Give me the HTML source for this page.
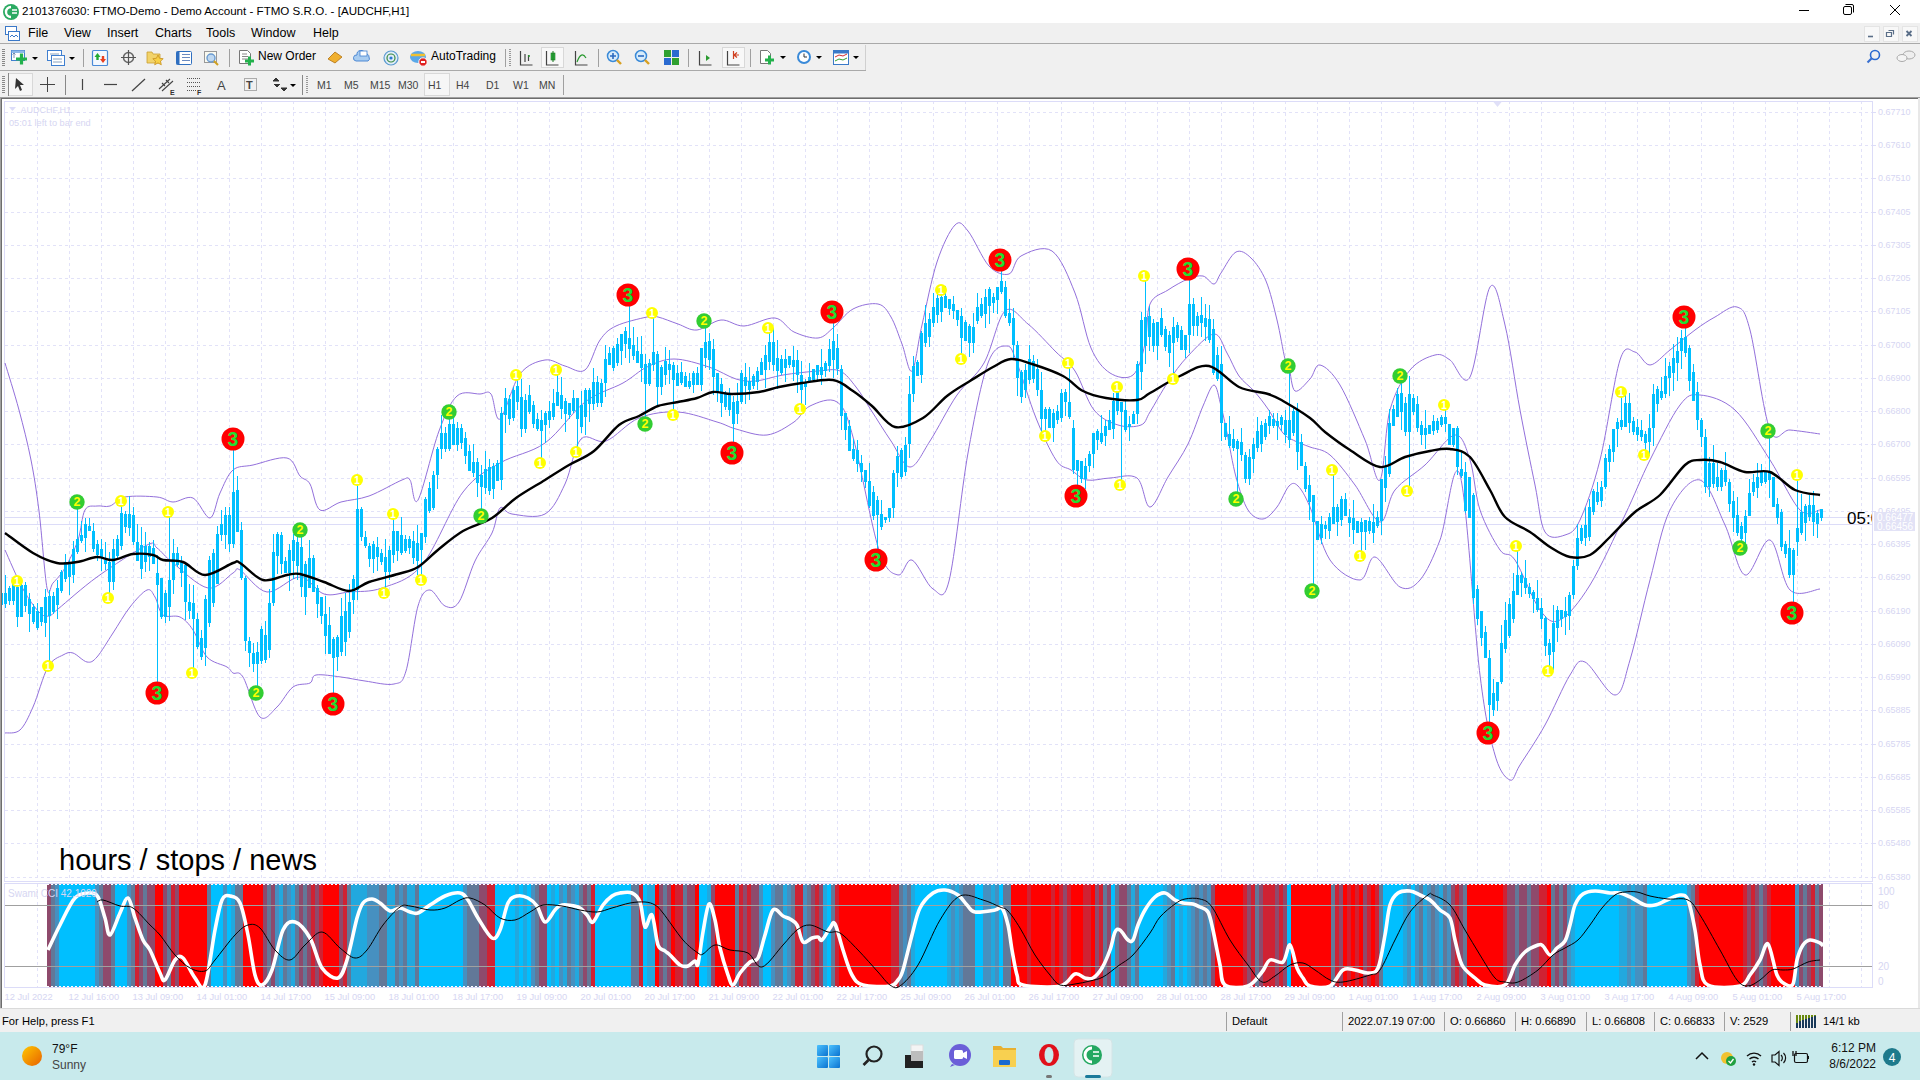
<!DOCTYPE html>
<html><head><meta charset="utf-8">
<style>
*{margin:0;padding:0;box-sizing:border-box}
html,body{width:1920px;height:1080px;overflow:hidden;background:#fff;font-family:"Liberation Sans",sans-serif;color:#000}
.abs{position:absolute}
#title{left:0;top:0;width:1920px;height:23px;background:#fff}
#title .t{left:22px;top:4px;font-size:11.6px;white-space:nowrap}
#menu{left:0;top:23px;width:1920px;height:21px;background:#F0F0F0;border-bottom:1px solid #A9A9A9}
#menu span{position:absolute;top:3px;font-size:12.5px}
#tb1{left:0;top:44px;width:1920px;height:27px;background:#F0F0F0}
#tb2{left:0;top:71px;width:1920px;height:27px;background:#F0F0F0}
.tbt{position:absolute;font-size:12px;white-space:nowrap}
#status{left:0;top:1008px;width:1920px;height:24px;background:#F0F0F0;border-top:1px solid #DADADA}
#status span{position:absolute;top:6px;font-size:11.2px;white-space:nowrap}
.sep{position:absolute;top:3px;width:1px;height:19px;background:#A0A0A0}
#taskbar{left:0;top:1032px;width:1920px;height:48px;background:#C8EAEC}
.chart{position:absolute;left:0;top:0}
.ax{font-size:10px;fill:#D6D6F2;font-family:"Liberation Sans",sans-serif}
.dl{font-size:9.3px}
.pl{font-size:9px}
.axw{font-size:10px;fill:#fff;font-family:"Liberation Sans",sans-serif}
.big{font-size:29px;fill:#000;font-family:"Liberation Sans",sans-serif}
.cd{font-size:17px;fill:#000;font-family:"Liberation Sans",sans-serif}
.d3{font-size:19.5px;font-weight:bold;fill:#22DD33;text-anchor:middle;font-family:"Liberation Sans",sans-serif}
.d2{font-size:12.5px;font-weight:bold;fill:#FFFF00;text-anchor:middle;font-family:"Liberation Sans",sans-serif}
.d1{font-size:10px;font-weight:bold;fill:#fff;text-anchor:middle;font-family:"Liberation Sans",sans-serif}
</style></head><body>
<svg class="chart" width="1920" height="1080" viewBox="0 0 1920 1080">
<rect x="2" y="99" width="1916" height="909" fill="#fff"/>
<g stroke="#E2E2F8" stroke-width="1" stroke-dasharray="3 3" fill="none" shape-rendering="crispEdges"><path d="M5 112.5H1872M5 145.5H1872M5 178.5H1872M5 212.5H1872M5 245.5H1872M5 278.5H1872M5 311.5H1872M5 345.5H1872M5 378.5H1872M5 411.5H1872M5 444.5H1872M5 478.5H1872M5 511.5H1872M5 544.5H1872M5 577.5H1872M5 611.5H1872M5 644.5H1872M5 677.5H1872M5 710.5H1872M5 744.5H1872M5 777.5H1872M5 810.5H1872M5 843.5H1872M5 877.5H1872M37.5 101V881M69.5 101V881M101.5 101V881M133.5 101V881M165.5 101V881M197.5 101V881M229.5 101V881M261.5 101V881M293.5 101V881M325.5 101V881M357.5 101V881M389.5 101V881M421.5 101V881M453.5 101V881M485.5 101V881M517.5 101V881M549.5 101V881M581.5 101V881M613.5 101V881M645.5 101V881M677.5 101V881M709.5 101V881M741.5 101V881M773.5 101V881M805.5 101V881M837.5 101V881M869.5 101V881M901.5 101V881M933.5 101V881M965.5 101V881M997.5 101V881M1029.5 101V881M1061.5 101V881M1093.5 101V881M1125.5 101V881M1157.5 101V881M1189.5 101V881M1221.5 101V881M1253.5 101V881M1285.5 101V881M1317.5 101V881M1349.5 101V881M1381.5 101V881M1413.5 101V881M1445.5 101V881M1477.5 101V881M1509.5 101V881M1541.5 101V881M1573.5 101V881M1605.5 101V881M1637.5 101V881M1669.5 101V881M1701.5 101V881M1733.5 101V881M1765.5 101V881M1797.5 101V881M1829.5 101V881M1861.5 101V881M37.5 884V987M69.5 884V987M101.5 884V987M133.5 884V987M165.5 884V987M197.5 884V987M229.5 884V987M261.5 884V987M293.5 884V987M325.5 884V987M357.5 884V987M389.5 884V987M421.5 884V987M453.5 884V987M485.5 884V987M517.5 884V987M549.5 884V987M581.5 884V987M613.5 884V987M645.5 884V987M677.5 884V987M709.5 884V987M741.5 884V987M773.5 884V987M805.5 884V987M837.5 884V987M869.5 884V987M901.5 884V987M933.5 884V987M965.5 884V987M997.5 884V987M1029.5 884V987M1061.5 884V987M1093.5 884V987M1125.5 884V987M1157.5 884V987M1189.5 884V987M1221.5 884V987M1253.5 884V987M1285.5 884V987M1317.5 884V987M1349.5 884V987M1381.5 884V987M1413.5 884V987M1445.5 884V987M1477.5 884V987M1509.5 884V987M1541.5 884V987M1573.5 884V987M1605.5 884V987M1637.5 884V987M1669.5 884V987M1701.5 884V987M1733.5 884V987M1765.5 884V987M1797.5 884V987M1829.5 884V987M1861.5 884V987"/></g>
<g fill="none" stroke="#DCDCF8" stroke-width="1" shape-rendering="crispEdges">
<path d="M4.5 101.5H1872.5V881.5H4.5Z"/>
<path d="M4.5 883.5H1872.5V987.5H4.5Z"/>
<path d="M1872 112.5h4M1872 145.5h4M1872 178.5h4M1872 212.5h4M1872 245.5h4M1872 278.5h4M1872 311.5h4M1872 345.5h4M1872 378.5h4M1872 411.5h4M1872 444.5h4M1872 478.5h4M1872 511.5h4M1872 544.5h4M1872 577.5h4M1872 611.5h4M1872 644.5h4M1872 677.5h4M1872 710.5h4M1872 744.5h4M1872 777.5h4M1872 810.5h4M1872 843.5h4M1872 877.5h4"/>

</g>
<path d="M5 517.5H1872M5 524.5H1872" stroke="#DCDCF8" stroke-width="1" shape-rendering="crispEdges"/>
<g shape-rendering="crispEdges"><rect x="47" y="884" width="4" height="103" fill="#8E4A6C"/><rect x="51" y="884" width="4" height="103" fill="#627898"/><rect x="55" y="884" width="4" height="103" fill="#4690C0"/><rect x="59" y="884" width="36" height="103" fill="#00BFFF"/><rect x="95" y="884" width="4" height="103" fill="#4690C0"/><rect x="99" y="884" width="4" height="103" fill="#627898"/><rect x="103" y="884" width="8" height="103" fill="#8E4A6C"/><rect x="111" y="884" width="4" height="103" fill="#627898"/><rect x="115" y="884" width="12" height="103" fill="#00BFFF"/><rect x="127" y="884" width="4" height="103" fill="#4690C0"/><rect x="131" y="884" width="4" height="103" fill="#627898"/><rect x="135" y="884" width="4" height="103" fill="#CF2233"/><rect x="139" y="884" width="4" height="103" fill="#8E4A6C"/><rect x="143" y="884" width="4" height="103" fill="#627898"/><rect x="147" y="884" width="8" height="103" fill="#8E4A6C"/><rect x="155" y="884" width="8" height="103" fill="#FF0000"/><rect x="163" y="884" width="4" height="103" fill="#8E4A6C"/><rect x="167" y="884" width="4" height="103" fill="#627898"/><rect x="171" y="884" width="4" height="103" fill="#CF2233"/><rect x="175" y="884" width="4" height="103" fill="#8E4A6C"/><rect x="179" y="884" width="28" height="103" fill="#FF0000"/><rect x="207" y="884" width="4" height="103" fill="#627898"/><rect x="211" y="884" width="12" height="103" fill="#00BFFF"/><rect x="223" y="884" width="4" height="103" fill="#4690C0"/><rect x="227" y="884" width="4" height="103" fill="#00BFFF"/><rect x="231" y="884" width="4" height="103" fill="#22A8DE"/><rect x="235" y="884" width="8" height="103" fill="#627898"/><rect x="243" y="884" width="20" height="103" fill="#FF0000"/><rect x="263" y="884" width="4" height="103" fill="#8E4A6C"/><rect x="267" y="884" width="4" height="103" fill="#627898"/><rect x="271" y="884" width="4" height="103" fill="#8E4A6C"/><rect x="275" y="884" width="4" height="103" fill="#4690C0"/><rect x="279" y="884" width="4" height="103" fill="#22A8DE"/><rect x="283" y="884" width="4" height="103" fill="#627898"/><rect x="287" y="884" width="4" height="103" fill="#4690C0"/><rect x="291" y="884" width="4" height="103" fill="#22A8DE"/><rect x="295" y="884" width="4" height="103" fill="#627898"/><rect x="299" y="884" width="4" height="103" fill="#8E4A6C"/><rect x="303" y="884" width="4" height="103" fill="#627898"/><rect x="307" y="884" width="4" height="103" fill="#8E4A6C"/><rect x="311" y="884" width="4" height="103" fill="#CF2233"/><rect x="315" y="884" width="4" height="103" fill="#8E4A6C"/><rect x="319" y="884" width="4" height="103" fill="#CF2233"/><rect x="323" y="884" width="16" height="103" fill="#FF0000"/><rect x="339" y="884" width="4" height="103" fill="#8E4A6C"/><rect x="343" y="884" width="4" height="103" fill="#CF2233"/><rect x="347" y="884" width="4" height="103" fill="#627898"/><rect x="351" y="884" width="16" height="103" fill="#22A8DE"/><rect x="367" y="884" width="12" height="103" fill="#4690C0"/><rect x="379" y="884" width="8" height="103" fill="#627898"/><rect x="387" y="884" width="8" height="103" fill="#22A8DE"/><rect x="395" y="884" width="4" height="103" fill="#627898"/><rect x="399" y="884" width="4" height="103" fill="#4690C0"/><rect x="403" y="884" width="4" height="103" fill="#627898"/><rect x="407" y="884" width="8" height="103" fill="#22A8DE"/><rect x="415" y="884" width="4" height="103" fill="#627898"/><rect x="419" y="884" width="44" height="103" fill="#00BFFF"/><rect x="463" y="884" width="4" height="103" fill="#4690C0"/><rect x="467" y="884" width="12" height="103" fill="#627898"/><rect x="479" y="884" width="8" height="103" fill="#8E4A6C"/><rect x="487" y="884" width="8" height="103" fill="#CF2233"/><rect x="495" y="884" width="20" height="103" fill="#00BFFF"/><rect x="515" y="884" width="4" height="103" fill="#22A8DE"/><rect x="519" y="884" width="4" height="103" fill="#00BFFF"/><rect x="523" y="884" width="4" height="103" fill="#22A8DE"/><rect x="527" y="884" width="4" height="103" fill="#00BFFF"/><rect x="531" y="884" width="4" height="103" fill="#4690C0"/><rect x="535" y="884" width="4" height="103" fill="#627898"/><rect x="539" y="884" width="8" height="103" fill="#8E4A6C"/><rect x="547" y="884" width="4" height="103" fill="#00BFFF"/><rect x="551" y="884" width="4" height="103" fill="#22A8DE"/><rect x="555" y="884" width="4" height="103" fill="#00BFFF"/><rect x="559" y="884" width="4" height="103" fill="#4690C0"/><rect x="563" y="884" width="4" height="103" fill="#22A8DE"/><rect x="567" y="884" width="4" height="103" fill="#627898"/><rect x="571" y="884" width="4" height="103" fill="#4690C0"/><rect x="575" y="884" width="4" height="103" fill="#22A8DE"/><rect x="579" y="884" width="4" height="103" fill="#627898"/><rect x="583" y="884" width="4" height="103" fill="#8E4A6C"/><rect x="587" y="884" width="4" height="103" fill="#627898"/><rect x="591" y="884" width="4" height="103" fill="#CF2233"/><rect x="595" y="884" width="36" height="103" fill="#00BFFF"/><rect x="631" y="884" width="8" height="103" fill="#627898"/><rect x="639" y="884" width="4" height="103" fill="#CF2233"/><rect x="643" y="884" width="4" height="103" fill="#00BFFF"/><rect x="647" y="884" width="8" height="103" fill="#22A8DE"/><rect x="655" y="884" width="4" height="103" fill="#FF0000"/><rect x="659" y="884" width="4" height="103" fill="#8E4A6C"/><rect x="663" y="884" width="4" height="103" fill="#627898"/><rect x="667" y="884" width="4" height="103" fill="#8E4A6C"/><rect x="671" y="884" width="4" height="103" fill="#FF0000"/><rect x="675" y="884" width="8" height="103" fill="#CF2233"/><rect x="683" y="884" width="4" height="103" fill="#627898"/><rect x="687" y="884" width="8" height="103" fill="#8E4A6C"/><rect x="695" y="884" width="4" height="103" fill="#FF0000"/><rect x="699" y="884" width="8" height="103" fill="#00BFFF"/><rect x="707" y="884" width="4" height="103" fill="#22A8DE"/><rect x="711" y="884" width="4" height="103" fill="#8E4A6C"/><rect x="715" y="884" width="20" height="103" fill="#FF0000"/><rect x="735" y="884" width="4" height="103" fill="#627898"/><rect x="739" y="884" width="4" height="103" fill="#CF2233"/><rect x="743" y="884" width="4" height="103" fill="#8E4A6C"/><rect x="747" y="884" width="4" height="103" fill="#CF2233"/><rect x="751" y="884" width="8" height="103" fill="#8E4A6C"/><rect x="759" y="884" width="4" height="103" fill="#4690C0"/><rect x="763" y="884" width="8" height="103" fill="#00BFFF"/><rect x="771" y="884" width="4" height="103" fill="#4690C0"/><rect x="775" y="884" width="8" height="103" fill="#627898"/><rect x="783" y="884" width="4" height="103" fill="#22A8DE"/><rect x="787" y="884" width="4" height="103" fill="#4690C0"/><rect x="791" y="884" width="4" height="103" fill="#627898"/><rect x="795" y="884" width="8" height="103" fill="#CF2233"/><rect x="803" y="884" width="4" height="103" fill="#4690C0"/><rect x="807" y="884" width="4" height="103" fill="#627898"/><rect x="811" y="884" width="4" height="103" fill="#8E4A6C"/><rect x="815" y="884" width="4" height="103" fill="#CF2233"/><rect x="819" y="884" width="4" height="103" fill="#8E4A6C"/><rect x="823" y="884" width="4" height="103" fill="#22A8DE"/><rect x="827" y="884" width="4" height="103" fill="#00BFFF"/><rect x="831" y="884" width="4" height="103" fill="#627898"/><rect x="835" y="884" width="4" height="103" fill="#CF2233"/><rect x="839" y="884" width="52" height="103" fill="#FF0000"/><rect x="891" y="884" width="8" height="103" fill="#CF2233"/><rect x="899" y="884" width="4" height="103" fill="#627898"/><rect x="903" y="884" width="4" height="103" fill="#4690C0"/><rect x="907" y="884" width="4" height="103" fill="#627898"/><rect x="911" y="884" width="4" height="103" fill="#22A8DE"/><rect x="915" y="884" width="32" height="103" fill="#00BFFF"/><rect x="947" y="884" width="4" height="103" fill="#22A8DE"/><rect x="951" y="884" width="4" height="103" fill="#4690C0"/><rect x="955" y="884" width="4" height="103" fill="#22A8DE"/><rect x="959" y="884" width="4" height="103" fill="#4690C0"/><rect x="963" y="884" width="12" height="103" fill="#627898"/><rect x="975" y="884" width="8" height="103" fill="#00BFFF"/><rect x="983" y="884" width="8" height="103" fill="#4690C0"/><rect x="991" y="884" width="4" height="103" fill="#22A8DE"/><rect x="995" y="884" width="4" height="103" fill="#4690C0"/><rect x="999" y="884" width="4" height="103" fill="#00BFFF"/><rect x="1003" y="884" width="8" height="103" fill="#627898"/><rect x="1011" y="884" width="16" height="103" fill="#FF0000"/><rect x="1027" y="884" width="4" height="103" fill="#CF2233"/><rect x="1031" y="884" width="20" height="103" fill="#FF0000"/><rect x="1051" y="884" width="4" height="103" fill="#CF2233"/><rect x="1055" y="884" width="4" height="103" fill="#FF0000"/><rect x="1059" y="884" width="4" height="103" fill="#CF2233"/><rect x="1063" y="884" width="4" height="103" fill="#8E4A6C"/><rect x="1067" y="884" width="4" height="103" fill="#CF2233"/><rect x="1071" y="884" width="12" height="103" fill="#FF0000"/><rect x="1083" y="884" width="8" height="103" fill="#CF2233"/><rect x="1091" y="884" width="4" height="103" fill="#FF0000"/><rect x="1095" y="884" width="4" height="103" fill="#8E4A6C"/><rect x="1099" y="884" width="4" height="103" fill="#CF2233"/><rect x="1103" y="884" width="4" height="103" fill="#627898"/><rect x="1107" y="884" width="4" height="103" fill="#8E4A6C"/><rect x="1111" y="884" width="4" height="103" fill="#00BFFF"/><rect x="1115" y="884" width="4" height="103" fill="#627898"/><rect x="1119" y="884" width="8" height="103" fill="#8E4A6C"/><rect x="1127" y="884" width="4" height="103" fill="#627898"/><rect x="1131" y="884" width="4" height="103" fill="#22A8DE"/><rect x="1135" y="884" width="4" height="103" fill="#627898"/><rect x="1139" y="884" width="24" height="103" fill="#00BFFF"/><rect x="1163" y="884" width="4" height="103" fill="#22A8DE"/><rect x="1167" y="884" width="4" height="103" fill="#4690C0"/><rect x="1171" y="884" width="4" height="103" fill="#627898"/><rect x="1175" y="884" width="4" height="103" fill="#00BFFF"/><rect x="1179" y="884" width="4" height="103" fill="#22A8DE"/><rect x="1183" y="884" width="4" height="103" fill="#00BFFF"/><rect x="1187" y="884" width="4" height="103" fill="#22A8DE"/><rect x="1191" y="884" width="4" height="103" fill="#4690C0"/><rect x="1195" y="884" width="4" height="103" fill="#627898"/><rect x="1199" y="884" width="4" height="103" fill="#4690C0"/><rect x="1203" y="884" width="4" height="103" fill="#627898"/><rect x="1207" y="884" width="4" height="103" fill="#4690C0"/><rect x="1211" y="884" width="4" height="103" fill="#8E4A6C"/><rect x="1215" y="884" width="28" height="103" fill="#FF0000"/><rect x="1243" y="884" width="4" height="103" fill="#CF2233"/><rect x="1247" y="884" width="4" height="103" fill="#8E4A6C"/><rect x="1251" y="884" width="4" height="103" fill="#CF2233"/><rect x="1255" y="884" width="4" height="103" fill="#627898"/><rect x="1259" y="884" width="4" height="103" fill="#8E4A6C"/><rect x="1263" y="884" width="12" height="103" fill="#CF2233"/><rect x="1275" y="884" width="4" height="103" fill="#8E4A6C"/><rect x="1279" y="884" width="4" height="103" fill="#CF2233"/><rect x="1283" y="884" width="4" height="103" fill="#8E4A6C"/><rect x="1287" y="884" width="4" height="103" fill="#00BFFF"/><rect x="1291" y="884" width="40" height="103" fill="#FF0000"/><rect x="1331" y="884" width="4" height="103" fill="#627898"/><rect x="1335" y="884" width="4" height="103" fill="#CF2233"/><rect x="1339" y="884" width="4" height="103" fill="#8E4A6C"/><rect x="1343" y="884" width="4" height="103" fill="#FF0000"/><rect x="1347" y="884" width="4" height="103" fill="#CF2233"/><rect x="1351" y="884" width="4" height="103" fill="#FF0000"/><rect x="1355" y="884" width="4" height="103" fill="#CF2233"/><rect x="1359" y="884" width="4" height="103" fill="#FF0000"/><rect x="1363" y="884" width="4" height="103" fill="#8E4A6C"/><rect x="1367" y="884" width="4" height="103" fill="#CF2233"/><rect x="1371" y="884" width="4" height="103" fill="#FF0000"/><rect x="1375" y="884" width="4" height="103" fill="#CF2233"/><rect x="1379" y="884" width="4" height="103" fill="#627898"/><rect x="1383" y="884" width="20" height="103" fill="#00BFFF"/><rect x="1403" y="884" width="4" height="103" fill="#22A8DE"/><rect x="1407" y="884" width="4" height="103" fill="#4690C0"/><rect x="1411" y="884" width="4" height="103" fill="#00BFFF"/><rect x="1415" y="884" width="4" height="103" fill="#4690C0"/><rect x="1419" y="884" width="4" height="103" fill="#627898"/><rect x="1423" y="884" width="4" height="103" fill="#22A8DE"/><rect x="1427" y="884" width="4" height="103" fill="#4690C0"/><rect x="1431" y="884" width="4" height="103" fill="#627898"/><rect x="1435" y="884" width="4" height="103" fill="#4690C0"/><rect x="1439" y="884" width="4" height="103" fill="#22A8DE"/><rect x="1443" y="884" width="4" height="103" fill="#627898"/><rect x="1447" y="884" width="4" height="103" fill="#4690C0"/><rect x="1451" y="884" width="4" height="103" fill="#8E4A6C"/><rect x="1455" y="884" width="4" height="103" fill="#CF2233"/><rect x="1459" y="884" width="4" height="103" fill="#8E4A6C"/><rect x="1463" y="884" width="4" height="103" fill="#627898"/><rect x="1467" y="884" width="36" height="103" fill="#FF0000"/><rect x="1503" y="884" width="4" height="103" fill="#CF2233"/><rect x="1507" y="884" width="8" height="103" fill="#8E4A6C"/><rect x="1515" y="884" width="4" height="103" fill="#627898"/><rect x="1519" y="884" width="8" height="103" fill="#8E4A6C"/><rect x="1527" y="884" width="4" height="103" fill="#627898"/><rect x="1531" y="884" width="8" height="103" fill="#8E4A6C"/><rect x="1539" y="884" width="8" height="103" fill="#CF2233"/><rect x="1547" y="884" width="4" height="103" fill="#FF0000"/><rect x="1551" y="884" width="4" height="103" fill="#627898"/><rect x="1555" y="884" width="4" height="103" fill="#8E4A6C"/><rect x="1559" y="884" width="4" height="103" fill="#627898"/><rect x="1563" y="884" width="4" height="103" fill="#8E4A6C"/><rect x="1567" y="884" width="4" height="103" fill="#4690C0"/><rect x="1571" y="884" width="4" height="103" fill="#22A8DE"/><rect x="1575" y="884" width="44" height="103" fill="#00BFFF"/><rect x="1619" y="884" width="8" height="103" fill="#22A8DE"/><rect x="1627" y="884" width="4" height="103" fill="#4690C0"/><rect x="1631" y="884" width="4" height="103" fill="#22A8DE"/><rect x="1635" y="884" width="8" height="103" fill="#4690C0"/><rect x="1643" y="884" width="4" height="103" fill="#627898"/><rect x="1647" y="884" width="40" height="103" fill="#00BFFF"/><rect x="1687" y="884" width="4" height="103" fill="#4690C0"/><rect x="1691" y="884" width="4" height="103" fill="#627898"/><rect x="1695" y="884" width="4" height="103" fill="#CF2233"/><rect x="1699" y="884" width="44" height="103" fill="#FF0000"/><rect x="1743" y="884" width="4" height="103" fill="#CF2233"/><rect x="1747" y="884" width="4" height="103" fill="#8E4A6C"/><rect x="1751" y="884" width="4" height="103" fill="#CF2233"/><rect x="1755" y="884" width="4" height="103" fill="#8E4A6C"/><rect x="1759" y="884" width="4" height="103" fill="#627898"/><rect x="1763" y="884" width="4" height="103" fill="#8E4A6C"/><rect x="1767" y="884" width="4" height="103" fill="#CF2233"/><rect x="1771" y="884" width="24" height="103" fill="#FF0000"/><rect x="1795" y="884" width="4" height="103" fill="#4690C0"/><rect x="1799" y="884" width="4" height="103" fill="#8E4A6C"/><rect x="1803" y="884" width="4" height="103" fill="#627898"/><rect x="1807" y="884" width="4" height="103" fill="#8E4A6C"/><rect x="1811" y="884" width="4" height="103" fill="#CF2233"/><rect x="1815" y="884" width="4" height="103" fill="#627898"/><rect x="1819" y="884" width="4" height="103" fill="#8E4A6C"/></g>
<path d="M47 884.5H1823M47 986.5H1823" stroke="#fff" stroke-dasharray="2 2" shape-rendering="crispEdges"/>
<path d="M5 905.5H1872M5 966.5H1872" stroke="#A0A0A0" stroke-width="1" shape-rendering="crispEdges"/>
<path d="M48.0 950.0C50.0 945.8 55.5 933.7 60.0 925.0C64.5 916.3 70.0 903.3 75.0 898.0C80.0 892.7 86.2 893.2 90.0 893.0C93.8 892.8 95.5 892.8 98.0 897.0C100.5 901.2 103.0 911.7 105.0 918.0C107.0 924.3 107.5 935.8 110.0 935.0C112.5 934.2 117.0 919.2 120.0 913.0C123.0 906.8 125.5 897.2 128.0 898.0C130.5 898.8 132.5 911.0 135.0 918.0C137.5 925.0 140.5 934.7 143.0 940.0C145.5 945.3 147.2 944.5 150.0 950.0C152.8 955.5 157.5 968.0 160.0 973.0C162.5 978.0 162.5 982.2 165.0 980.0C167.5 977.8 172.0 963.7 175.0 960.0C178.0 956.3 179.7 955.0 183.0 958.0C186.3 961.0 191.3 973.5 195.0 978.0C198.7 982.5 201.7 993.0 205.0 985.0C208.3 977.0 212.2 944.2 215.0 930.0C217.8 915.8 219.5 905.7 222.0 900.0C224.5 894.3 227.0 895.5 230.0 896.0C233.0 896.5 237.0 896.5 240.0 903.0C243.0 909.5 245.5 923.0 248.0 935.0C250.5 947.0 252.7 966.7 255.0 975.0C257.3 983.3 259.2 985.8 262.0 985.0C264.8 984.2 268.5 979.2 272.0 970.0C275.5 960.8 279.2 938.0 283.0 930.0C286.8 922.0 290.5 920.7 295.0 922.0C299.5 923.3 305.5 930.3 310.0 938.0C314.5 945.7 317.3 961.3 322.0 968.0C326.7 974.7 333.8 979.3 338.0 978.0C342.2 976.7 343.8 970.0 347.0 960.0C350.2 950.0 354.3 927.5 357.0 918.0C359.7 908.5 360.5 906.2 363.0 903.0C365.5 899.8 369.2 899.0 372.0 899.0C374.8 899.0 377.0 901.0 380.0 903.0C383.0 905.0 386.7 910.2 390.0 911.0C393.3 911.8 396.7 907.8 400.0 908.0C403.3 908.2 407.0 911.2 410.0 912.0C413.0 912.8 414.7 914.2 418.0 913.0C421.3 911.8 425.5 907.8 430.0 905.0C434.5 902.2 440.0 898.0 445.0 896.0C450.0 894.0 456.2 892.3 460.0 893.0C463.8 893.7 465.0 895.8 468.0 900.0C471.0 904.2 474.0 911.7 478.0 918.0C482.0 924.3 488.3 936.0 492.0 938.0C495.7 940.0 497.3 935.8 500.0 930.0C502.7 924.2 505.2 908.7 508.0 903.0C510.8 897.3 513.7 896.8 517.0 896.0C520.3 895.2 524.7 896.3 528.0 898.0C531.3 899.7 534.2 902.0 537.0 906.0C539.8 910.0 542.0 921.3 545.0 922.0C548.0 922.7 552.2 912.8 555.0 910.0C557.8 907.2 558.2 905.5 562.0 905.0C565.8 904.5 573.8 905.3 578.0 907.0C582.2 908.7 584.5 912.5 587.0 915.0C589.5 917.5 590.3 923.7 593.0 922.0C595.7 920.3 599.8 909.3 603.0 905.0C606.2 900.7 609.2 898.0 612.0 896.0C614.8 894.0 616.7 893.5 620.0 893.0C623.3 892.5 628.7 891.5 632.0 893.0C635.3 894.5 637.8 896.3 640.0 902.0C642.2 907.7 643.0 924.8 645.0 927.0C647.0 929.2 649.8 912.0 652.0 915.0C654.2 918.0 655.8 939.0 658.0 945.0C660.2 951.0 663.0 949.3 665.0 951.0C667.0 952.7 667.5 952.7 670.0 955.0C672.5 957.3 677.0 963.2 680.0 965.0C683.0 966.8 685.5 966.7 688.0 966.0C690.5 965.3 693.3 961.3 695.0 961.0C696.7 960.7 696.7 968.8 698.0 964.0C699.3 959.2 701.2 942.0 703.0 932.0C704.8 922.0 707.0 906.0 709.0 904.0C711.0 902.0 713.2 912.7 715.0 920.0C716.8 927.3 717.8 938.8 720.0 948.0C722.2 957.2 725.8 968.8 728.0 975.0C730.2 981.2 731.0 985.3 733.0 985.0C735.0 984.7 737.2 976.8 740.0 973.0C742.8 969.2 747.0 964.5 750.0 962.0C753.0 959.5 755.5 962.5 758.0 958.0C760.5 953.5 762.5 943.0 765.0 935.0C767.5 927.0 770.0 913.2 773.0 910.0C776.0 906.8 780.2 914.5 783.0 916.0C785.8 917.5 787.7 917.5 790.0 919.0C792.3 920.5 794.8 921.2 797.0 925.0C799.2 928.8 800.5 939.8 803.0 942.0C805.5 944.2 809.5 938.8 812.0 938.0C814.5 937.2 816.3 936.7 818.0 937.0C819.7 937.3 820.0 941.5 822.0 940.0C824.0 938.5 827.8 930.7 830.0 928.0C832.2 925.3 832.8 920.3 835.0 924.0C837.2 927.7 840.2 941.5 843.0 950.0C845.8 958.5 848.7 969.2 852.0 975.0C855.3 980.8 856.7 983.2 863.0 985.0C869.3 986.8 884.2 986.8 890.0 986.0C895.8 985.2 895.8 982.7 898.0 980.0C900.2 977.3 900.7 977.5 903.0 970.0C905.3 962.5 909.2 945.3 912.0 935.0C914.8 924.7 916.5 915.0 920.0 908.0C923.5 901.0 928.8 896.0 933.0 893.0C937.2 890.0 940.8 889.7 945.0 890.0C949.2 890.3 954.3 892.5 958.0 895.0C961.7 897.5 964.2 902.2 967.0 905.0C969.8 907.8 970.3 911.2 975.0 912.0C979.7 912.8 990.5 910.7 995.0 910.0C999.5 909.3 999.8 905.5 1002.0 908.0C1004.2 910.5 1006.3 918.0 1008.0 925.0C1009.7 932.0 1010.5 941.7 1012.0 950.0C1013.5 958.3 1015.2 969.2 1017.0 975.0C1018.8 980.8 1015.8 983.2 1023.0 985.0C1030.2 986.8 1051.3 987.8 1060.0 986.0C1068.7 984.2 1070.8 975.3 1075.0 974.0C1079.2 972.7 1082.0 977.3 1085.0 978.0C1088.0 978.7 1090.2 979.7 1093.0 978.0C1095.8 976.3 1099.2 972.7 1102.0 968.0C1104.8 963.3 1107.8 956.0 1110.0 950.0C1112.2 944.0 1113.3 935.3 1115.0 932.0C1116.7 928.7 1117.8 928.7 1120.0 930.0C1122.2 931.3 1125.8 938.3 1128.0 940.0C1130.2 941.7 1131.3 942.5 1133.0 940.0C1134.7 937.5 1136.0 930.0 1138.0 925.0C1140.0 920.0 1142.2 914.7 1145.0 910.0C1147.8 905.3 1151.7 899.8 1155.0 897.0C1158.3 894.2 1161.7 892.5 1165.0 893.0C1168.3 893.5 1172.0 898.3 1175.0 900.0C1178.0 901.7 1180.0 902.3 1183.0 903.0C1186.0 903.7 1190.2 903.3 1193.0 904.0C1195.8 904.7 1197.5 905.7 1200.0 907.0C1202.5 908.3 1205.8 908.2 1208.0 912.0C1210.2 915.8 1211.0 921.2 1213.0 930.0C1215.0 938.8 1218.0 955.8 1220.0 965.0C1222.0 974.2 1220.3 981.5 1225.0 985.0C1229.7 988.5 1241.8 988.2 1248.0 986.0C1254.2 983.8 1258.3 976.3 1262.0 972.0C1265.7 967.7 1266.5 961.7 1270.0 960.0C1273.5 958.3 1279.7 964.5 1283.0 962.0C1286.3 959.5 1287.7 944.0 1290.0 945.0C1292.3 946.0 1294.8 962.5 1297.0 968.0C1299.2 973.5 1300.8 975.0 1303.0 978.0C1305.2 981.0 1305.5 984.7 1310.0 986.0C1314.5 987.3 1324.5 988.7 1330.0 986.0C1335.5 983.3 1338.8 972.7 1343.0 970.0C1347.2 967.3 1350.8 969.5 1355.0 970.0C1359.2 970.5 1364.2 973.3 1368.0 973.0C1371.8 972.7 1375.2 974.3 1378.0 968.0C1380.8 961.7 1383.0 945.5 1385.0 935.0C1387.0 924.5 1387.8 912.0 1390.0 905.0C1392.2 898.0 1394.7 895.3 1398.0 893.0C1401.3 890.7 1406.3 890.7 1410.0 891.0C1413.7 891.3 1416.7 893.5 1420.0 895.0C1423.3 896.5 1426.7 897.5 1430.0 900.0C1433.3 902.5 1436.7 907.0 1440.0 910.0C1443.3 913.0 1447.5 913.0 1450.0 918.0C1452.5 923.0 1453.0 932.2 1455.0 940.0C1457.0 947.8 1458.7 958.7 1462.0 965.0C1465.3 971.3 1471.2 974.7 1475.0 978.0C1478.8 981.3 1480.0 983.8 1485.0 985.0C1490.0 986.2 1500.0 988.3 1505.0 985.0C1510.0 981.7 1511.7 970.5 1515.0 965.0C1518.3 959.5 1521.2 955.3 1525.0 952.0C1528.8 948.7 1535.0 946.0 1538.0 945.0C1541.0 944.0 1541.0 944.3 1543.0 946.0C1545.0 947.7 1547.7 954.7 1550.0 955.0C1552.3 955.3 1554.5 950.3 1557.0 948.0C1559.5 945.7 1562.8 944.8 1565.0 941.0C1567.2 937.2 1568.3 931.0 1570.0 925.0C1571.7 919.0 1572.8 910.2 1575.0 905.0C1577.2 899.8 1579.7 896.3 1583.0 894.0C1586.3 891.7 1590.5 891.2 1595.0 891.0C1599.5 890.8 1605.8 892.7 1610.0 893.0C1614.2 893.3 1616.3 892.2 1620.0 893.0C1623.7 893.8 1627.8 896.0 1632.0 898.0C1636.2 900.0 1641.2 903.8 1645.0 905.0C1648.8 906.2 1651.3 905.8 1655.0 905.0C1658.7 904.2 1662.8 901.7 1667.0 900.0C1671.2 898.3 1676.5 895.0 1680.0 895.0C1683.5 895.0 1685.5 894.2 1688.0 900.0C1690.5 905.8 1693.0 919.2 1695.0 930.0C1697.0 940.8 1697.8 955.8 1700.0 965.0C1702.2 974.2 1701.3 981.5 1708.0 985.0C1714.7 988.5 1733.0 987.7 1740.0 986.0C1747.0 984.3 1746.7 979.3 1750.0 975.0C1753.3 970.7 1757.0 965.2 1760.0 960.0C1763.0 954.8 1765.2 941.5 1768.0 944.0C1770.8 946.5 1774.2 968.3 1777.0 975.0C1779.8 981.7 1782.3 982.5 1785.0 984.0C1787.7 985.5 1791.0 988.0 1793.0 984.0C1795.0 980.0 1795.3 966.5 1797.0 960.0C1798.7 953.5 1800.8 948.3 1803.0 945.0C1805.2 941.7 1807.2 940.3 1810.0 940.0C1812.8 939.7 1817.8 942.0 1820.0 943.0C1822.2 944.0 1822.5 945.5 1823.0 946.0" fill="none" stroke="#fff" stroke-width="3.6"/>
<path d="M97.0 902.0C98.0 901.7 99.2 899.3 103.0 900.0C106.8 900.7 115.0 904.7 120.0 906.0C125.0 907.3 128.0 904.8 133.0 908.0C138.0 911.2 145.5 920.5 150.0 925.0C154.5 929.5 155.8 930.0 160.0 935.0C164.2 940.0 170.0 949.5 175.0 955.0C180.0 960.5 185.0 965.3 190.0 968.0C195.0 970.7 200.8 972.3 205.0 971.0C209.2 969.7 210.0 966.0 215.0 960.0C220.0 954.0 229.5 940.8 235.0 935.0C240.5 929.2 243.8 926.2 248.0 925.0C252.2 923.8 255.5 923.8 260.0 928.0C264.5 932.2 270.0 944.7 275.0 950.0C280.0 955.3 285.0 960.8 290.0 960.0C295.0 959.2 299.7 949.7 305.0 945.0C310.3 940.3 316.2 931.5 322.0 932.0C327.8 932.5 334.5 943.7 340.0 948.0C345.5 952.3 350.5 957.7 355.0 958.0C359.5 958.3 362.3 955.5 367.0 950.0C371.7 944.5 377.5 932.2 383.0 925.0C388.5 917.8 395.5 910.2 400.0 907.0C404.5 903.8 405.0 905.5 410.0 906.0C415.0 906.5 424.2 909.7 430.0 910.0C435.8 910.3 440.0 909.7 445.0 908.0C450.0 906.3 455.8 901.7 460.0 900.0C464.2 898.3 465.8 897.2 470.0 898.0C474.2 898.8 480.0 901.7 485.0 905.0C490.0 908.3 495.0 915.5 500.0 918.0C505.0 920.5 510.0 921.0 515.0 920.0C520.0 919.0 525.3 914.5 530.0 912.0C534.7 909.5 537.7 906.0 543.0 905.0C548.3 904.0 555.8 905.2 562.0 906.0C568.2 906.8 574.2 909.0 580.0 910.0C585.8 911.0 591.7 912.3 597.0 912.0C602.3 911.7 606.5 909.5 612.0 908.0C617.5 906.5 624.5 904.0 630.0 903.0C635.5 902.0 640.8 901.7 645.0 902.0C649.2 902.3 652.0 903.2 655.0 905.0C658.0 906.8 658.3 907.2 663.0 913.0C667.7 918.8 677.2 933.3 683.0 940.0C688.8 946.7 694.7 950.7 698.0 953.0C701.3 955.3 700.2 955.3 703.0 954.0C705.8 952.7 710.5 945.7 715.0 945.0C719.5 944.3 724.5 948.7 730.0 950.0C735.5 951.3 742.7 950.2 748.0 953.0C753.3 955.8 756.2 968.3 762.0 967.0C767.8 965.7 777.2 951.2 783.0 945.0C788.8 938.8 792.5 933.3 797.0 930.0C801.5 926.7 804.8 924.7 810.0 925.0C815.2 925.3 823.0 930.7 828.0 932.0C833.0 933.3 835.0 930.0 840.0 933.0C845.0 936.0 851.7 943.5 858.0 950.0C864.3 956.5 872.7 966.2 878.0 972.0C883.3 977.8 886.3 982.7 890.0 985.0C893.7 987.3 895.3 989.3 900.0 986.0C904.7 982.7 911.3 976.0 918.0 965.0C924.7 954.0 933.0 931.5 940.0 920.0C947.0 908.5 952.8 899.3 960.0 896.0C967.2 892.7 976.3 898.2 983.0 900.0C989.7 901.8 995.8 905.2 1000.0 907.0C1004.2 908.8 1004.7 907.5 1008.0 911.0C1011.3 914.5 1015.5 920.7 1020.0 928.0C1024.5 935.3 1030.0 947.2 1035.0 955.0C1040.0 962.8 1045.8 970.0 1050.0 975.0C1054.2 980.0 1055.8 983.5 1060.0 985.0C1064.2 986.5 1070.0 984.7 1075.0 984.0C1080.0 983.3 1085.3 982.2 1090.0 981.0C1094.7 979.8 1098.3 979.5 1103.0 977.0C1107.7 974.5 1113.0 969.7 1118.0 966.0C1123.0 962.3 1127.7 960.5 1133.0 955.0C1138.3 949.5 1145.5 939.3 1150.0 933.0C1154.5 926.7 1155.8 921.8 1160.0 917.0C1164.2 912.2 1170.8 907.0 1175.0 904.0C1179.2 901.0 1180.8 899.8 1185.0 899.0C1189.2 898.2 1195.5 897.7 1200.0 899.0C1204.5 900.3 1207.0 900.2 1212.0 907.0C1217.0 913.8 1224.0 930.3 1230.0 940.0C1236.0 949.7 1242.7 958.0 1248.0 965.0C1253.3 972.0 1257.5 980.2 1262.0 982.0C1266.5 983.8 1270.3 978.8 1275.0 976.0C1279.7 973.2 1285.3 967.2 1290.0 965.0C1294.7 962.8 1298.8 962.2 1303.0 963.0C1307.2 963.8 1310.5 967.2 1315.0 970.0C1319.5 972.8 1325.3 978.0 1330.0 980.0C1334.7 982.0 1336.3 982.8 1343.0 982.0C1349.7 981.2 1363.8 977.0 1370.0 975.0C1376.2 973.0 1375.8 975.8 1380.0 970.0C1384.2 964.2 1390.0 949.7 1395.0 940.0C1400.0 930.3 1404.5 919.5 1410.0 912.0C1415.5 904.5 1424.2 897.8 1428.0 895.0C1431.8 892.2 1429.3 893.3 1433.0 895.0C1436.7 896.7 1444.7 899.2 1450.0 905.0C1455.3 910.8 1460.0 921.7 1465.0 930.0C1470.0 938.3 1475.0 947.0 1480.0 955.0C1485.0 963.0 1490.8 973.5 1495.0 978.0C1499.2 982.5 1501.2 981.3 1505.0 982.0C1508.8 982.7 1512.5 984.0 1518.0 982.0C1523.5 980.0 1532.2 974.5 1538.0 970.0C1543.8 965.5 1548.5 958.7 1553.0 955.0C1557.5 951.3 1560.8 950.5 1565.0 948.0C1569.2 945.5 1573.8 943.8 1578.0 940.0C1582.2 936.2 1586.0 930.3 1590.0 925.0C1594.0 919.7 1597.8 913.0 1602.0 908.0C1606.2 903.0 1611.2 897.7 1615.0 895.0C1618.8 892.3 1621.3 892.5 1625.0 892.0C1628.7 891.5 1632.8 891.3 1637.0 892.0C1641.2 892.7 1644.8 894.8 1650.0 896.0C1655.2 897.2 1661.7 898.3 1668.0 899.0C1674.3 899.7 1682.7 897.3 1688.0 900.0C1693.3 902.7 1694.7 906.7 1700.0 915.0C1705.3 923.3 1713.8 939.2 1720.0 950.0C1726.2 960.8 1732.3 974.0 1737.0 980.0C1741.7 986.0 1744.2 986.0 1748.0 986.0C1751.8 986.0 1756.0 982.7 1760.0 980.0C1764.0 977.3 1768.2 971.7 1772.0 970.0C1775.8 968.3 1779.5 970.2 1783.0 970.0C1786.5 969.8 1788.8 970.3 1793.0 969.0C1797.2 967.7 1803.5 963.5 1808.0 962.0C1812.5 960.5 1818.0 960.3 1820.0 960.0" fill="none" stroke="#000" stroke-width="1"/>
<g fill="none" stroke="#9370DB" stroke-width="1">
<path d="M5.0 363.0C7.3 370.8 14.7 393.8 19.0 410.0C23.3 426.2 27.7 443.2 31.0 460.0C34.3 476.8 36.3 489.7 39.0 511.0C41.7 532.3 44.7 576.0 47.0 588.0C49.3 600.0 50.0 586.3 53.0 583.0C56.0 579.7 60.8 575.2 65.0 568.0C69.2 560.8 74.7 549.7 78.0 540.0C81.3 530.3 81.8 515.7 85.0 510.0C88.2 504.3 92.8 506.7 97.0 506.0C101.2 505.3 105.3 507.5 110.0 506.0C114.7 504.5 117.2 498.5 125.0 497.0C132.8 495.5 149.0 496.2 157.0 497.0C165.0 497.8 167.0 501.8 173.0 502.0C179.0 502.2 186.8 495.3 193.0 498.0C199.2 500.7 205.5 518.8 210.0 518.0C214.5 517.2 216.2 501.0 220.0 493.0C223.8 485.0 227.5 474.7 233.0 470.0C238.5 465.3 244.0 467.0 253.0 465.0C262.0 463.0 279.2 456.2 287.0 458.0C294.8 459.8 296.2 471.7 300.0 476.0C303.8 480.3 306.7 478.3 310.0 484.0C313.3 489.7 314.8 507.0 320.0 510.0C325.2 513.0 332.8 504.3 341.0 502.0C349.2 499.7 358.8 499.7 369.0 496.0C379.2 492.3 395.2 482.7 402.0 480.0C408.8 477.3 407.3 476.7 410.0 480.0C412.7 483.3 413.2 508.2 418.0 500.0C422.8 491.8 432.5 448.3 439.0 431.0C445.5 413.7 450.2 402.2 457.0 396.0C463.8 389.8 474.3 394.3 480.0 394.0C485.7 393.7 487.7 389.8 491.0 394.0C494.3 398.2 495.2 422.3 500.0 419.0C504.8 415.7 512.5 383.8 520.0 374.0C527.5 364.2 537.5 361.3 545.0 360.0C552.5 358.7 558.3 364.3 565.0 366.0C571.7 367.7 579.2 374.3 585.0 370.0C590.8 365.7 594.8 347.3 600.0 340.0C605.2 332.7 608.2 329.8 616.0 326.0C623.8 322.2 640.0 318.5 647.0 317.0C654.0 315.5 652.8 315.8 658.0 317.0C663.2 318.2 671.5 321.8 678.0 324.0C684.5 326.2 689.8 330.7 697.0 330.0C704.2 329.3 713.2 320.7 721.0 320.0C728.8 319.3 735.0 326.3 744.0 326.0C753.0 325.7 766.7 317.0 775.0 318.0C783.3 319.0 786.8 328.7 794.0 332.0C801.2 335.3 811.5 338.7 818.0 338.0C824.5 337.3 827.2 332.8 833.0 328.0C838.8 323.2 845.5 313.0 853.0 309.0C860.5 305.0 871.7 302.7 878.0 304.0C884.3 305.3 887.0 310.3 891.0 317.0C895.0 323.7 898.5 335.0 902.0 344.0C905.5 353.0 908.7 374.2 912.0 371.0C915.3 367.8 917.8 343.2 922.0 325.0C926.2 306.8 931.5 278.7 937.0 262.0C942.5 245.3 949.8 230.2 955.0 225.0C960.2 219.8 962.3 224.2 968.0 231.0C973.7 237.8 982.2 258.8 989.0 266.0C995.8 273.2 1003.7 275.7 1009.0 274.0C1014.3 272.3 1013.8 259.8 1021.0 256.0C1028.2 252.2 1043.0 244.8 1052.0 251.0C1061.0 257.2 1068.5 276.8 1075.0 293.0C1081.5 309.2 1085.2 334.7 1091.0 348.0C1096.8 361.3 1103.0 368.5 1110.0 373.0C1117.0 377.5 1127.2 379.8 1133.0 375.0C1138.8 370.2 1142.2 355.8 1145.0 344.0C1147.8 332.2 1146.2 313.0 1150.0 304.0C1153.8 295.0 1161.7 294.2 1168.0 290.0C1174.3 285.8 1182.2 281.3 1188.0 279.0C1193.8 276.7 1198.7 275.2 1203.0 276.0C1207.3 276.8 1211.0 284.5 1214.0 284.0C1217.0 283.5 1217.3 278.3 1221.0 273.0C1224.7 267.7 1231.0 254.5 1236.0 252.0C1241.0 249.5 1246.0 253.2 1251.0 258.0C1256.0 262.8 1261.7 270.7 1266.0 281.0C1270.3 291.3 1273.8 307.0 1277.0 320.0C1280.2 333.0 1283.0 351.2 1285.0 359.0C1287.0 366.8 1287.3 361.7 1289.0 367.0C1290.7 372.3 1291.5 389.0 1295.0 391.0C1298.5 393.0 1305.8 383.3 1310.0 379.0C1314.2 374.7 1315.0 364.0 1320.0 365.0C1325.0 366.0 1332.5 372.5 1340.0 385.0C1347.5 397.5 1358.3 424.2 1365.0 440.0C1371.7 455.8 1375.8 485.0 1380.0 480.0C1384.2 475.0 1385.0 428.3 1390.0 410.0C1395.0 391.7 1402.5 379.2 1410.0 370.0C1417.5 360.8 1428.3 356.7 1435.0 355.0C1441.7 353.3 1444.2 356.3 1450.0 360.0C1455.8 363.7 1463.3 389.2 1470.0 377.0C1476.7 364.8 1484.2 295.7 1490.0 287.0C1495.8 278.3 1500.0 304.5 1505.0 325.0C1510.0 345.5 1515.0 383.3 1520.0 410.0C1525.0 436.7 1530.8 464.7 1535.0 485.0C1539.2 505.3 1540.0 523.7 1545.0 532.0C1550.0 540.3 1559.2 537.0 1565.0 535.0C1570.8 533.0 1574.2 532.5 1580.0 520.0C1585.8 507.5 1593.3 486.7 1600.0 460.0C1606.7 433.3 1614.2 378.0 1620.0 360.0C1625.8 342.0 1630.0 351.2 1635.0 352.0C1640.0 352.8 1644.2 365.3 1650.0 365.0C1655.8 364.7 1662.5 355.8 1670.0 350.0C1677.5 344.2 1687.5 335.5 1695.0 330.0C1702.5 324.5 1708.0 320.8 1715.0 317.0C1722.0 313.2 1731.2 304.8 1737.0 307.0C1742.8 309.2 1744.5 309.5 1750.0 330.0C1755.5 350.5 1763.3 413.3 1770.0 430.0C1776.7 446.7 1781.7 429.3 1790.0 430.0C1798.3 430.7 1815.0 433.3 1820.0 434.0"/><path d="M5.0 550.0C8.0 556.5 17.3 578.7 23.0 589.0C28.7 599.3 34.7 607.5 39.0 612.0C43.3 616.5 45.8 616.5 49.0 616.0C52.2 615.5 50.0 615.5 58.0 609.0C66.0 602.5 82.2 587.7 97.0 577.0C111.8 566.3 137.0 549.8 147.0 545.0C157.0 540.2 152.7 545.0 157.0 548.0C161.3 551.0 164.5 556.3 173.0 563.0C181.5 569.7 198.0 586.3 208.0 588.0C218.0 589.7 227.7 576.0 233.0 573.0C238.3 570.0 234.3 566.8 240.0 570.0C245.7 573.2 257.0 590.8 267.0 592.0C277.0 593.2 290.5 576.7 300.0 577.0C309.5 577.3 315.8 591.5 324.0 594.0C332.2 596.5 339.3 593.0 349.0 592.0C358.7 591.0 369.8 592.5 382.0 588.0C394.2 583.5 408.5 581.0 422.0 565.0C435.5 549.0 450.0 509.0 463.0 492.0C476.0 475.0 486.3 471.2 500.0 463.0C513.7 454.8 530.8 453.2 545.0 443.0C559.2 432.8 572.0 412.0 585.0 402.0C598.0 392.0 612.7 388.8 623.0 383.0C633.3 377.2 638.5 371.0 647.0 367.0C655.5 363.0 663.7 359.0 674.0 359.0C684.3 359.0 698.7 363.7 709.0 367.0C719.3 370.3 728.2 376.7 736.0 379.0C743.8 381.3 748.2 381.7 756.0 381.0C763.8 380.3 772.7 376.7 783.0 375.0C793.3 373.3 808.5 371.7 818.0 371.0C827.5 370.3 833.7 368.3 840.0 371.0C846.3 373.7 850.8 380.5 856.0 387.0C861.2 393.5 865.2 401.0 871.0 410.0C876.8 419.0 884.5 431.5 891.0 441.0C897.5 450.5 903.5 467.0 910.0 467.0C916.5 467.0 922.2 453.0 930.0 441.0C937.8 429.0 948.0 408.0 957.0 395.0C966.0 382.0 976.0 377.0 984.0 363.0C992.0 349.0 997.7 317.5 1005.0 311.0C1012.3 304.5 1019.5 317.2 1028.0 324.0C1036.5 330.8 1048.2 344.2 1056.0 352.0C1063.8 359.8 1068.7 361.3 1075.0 371.0C1081.3 380.7 1086.8 401.0 1094.0 410.0C1101.2 419.0 1110.2 422.5 1118.0 425.0C1125.8 427.5 1135.7 427.2 1141.0 425.0C1146.3 422.8 1145.5 419.2 1150.0 412.0C1154.5 404.8 1161.7 391.3 1168.0 382.0C1174.3 372.7 1180.3 364.0 1188.0 356.0C1195.7 348.0 1207.5 334.5 1214.0 334.0C1220.5 333.5 1222.8 346.0 1227.0 353.0C1231.2 360.0 1234.5 369.7 1239.0 376.0C1243.5 382.3 1249.2 385.5 1254.0 391.0C1258.8 396.5 1263.2 402.0 1268.0 409.0C1272.8 416.0 1278.5 427.7 1283.0 433.0C1287.5 438.3 1290.5 438.7 1295.0 441.0C1299.5 443.3 1304.2 444.7 1310.0 447.0C1315.8 449.3 1322.5 448.7 1330.0 455.0C1337.5 461.3 1346.7 473.8 1355.0 485.0C1363.3 496.2 1373.3 521.2 1380.0 522.0C1386.7 522.8 1387.5 499.5 1395.0 490.0C1402.5 480.5 1415.0 474.2 1425.0 465.0C1435.0 455.8 1447.5 435.8 1455.0 435.0C1462.5 434.2 1465.8 447.5 1470.0 460.0C1474.2 472.5 1475.0 495.0 1480.0 510.0C1485.0 525.0 1494.2 541.7 1500.0 550.0C1505.8 558.3 1508.3 550.0 1515.0 560.0C1521.7 570.0 1532.5 600.0 1540.0 610.0C1547.5 620.0 1551.7 624.2 1560.0 620.0C1568.3 615.8 1579.2 602.5 1590.0 585.0C1600.8 567.5 1615.0 535.8 1625.0 515.0C1635.0 494.2 1640.8 478.3 1650.0 460.0C1659.2 441.7 1671.7 415.8 1680.0 405.0C1688.3 394.2 1690.8 394.2 1700.0 395.0C1709.2 395.8 1723.3 399.2 1735.0 410.0C1746.7 420.8 1759.2 443.3 1770.0 460.0C1780.8 476.7 1791.7 501.7 1800.0 510.0C1808.3 518.3 1816.7 510.0 1820.0 510.0"/><path d="M5.0 733.0C7.5 732.5 15.3 734.3 20.0 730.0C24.7 725.7 28.3 717.5 33.0 707.0C37.7 696.5 43.0 675.7 48.0 667.0C53.0 658.3 58.8 657.3 63.0 655.0C67.2 652.7 69.0 651.8 73.0 653.0C77.0 654.2 83.0 661.3 87.0 662.0C91.0 662.7 92.7 661.8 97.0 657.0C101.3 652.2 107.5 641.3 113.0 633.0C118.5 624.7 124.3 614.2 130.0 607.0C135.7 599.8 142.8 591.7 147.0 590.0C151.2 588.3 152.3 592.8 155.0 597.0C157.7 601.2 158.8 611.7 163.0 615.0C167.2 618.3 175.0 614.5 180.0 617.0C185.0 619.5 188.5 623.3 193.0 630.0C197.5 636.7 201.3 650.8 207.0 657.0C212.7 663.2 222.7 664.3 227.0 667.0C231.3 669.7 230.3 671.3 233.0 673.0C235.7 674.7 238.5 669.7 243.0 677.0C247.5 684.3 254.3 712.0 260.0 717.0C265.7 722.0 271.5 712.0 277.0 707.0C282.5 702.0 287.5 691.0 293.0 687.0C298.5 683.0 306.2 685.0 310.0 683.0C313.8 681.0 310.8 676.0 316.0 675.0C321.2 674.0 332.8 676.0 341.0 677.0C349.2 678.0 356.2 679.8 365.0 681.0C373.8 682.2 387.2 685.7 394.0 684.0C400.8 682.3 402.0 684.0 406.0 671.0C410.0 658.0 414.0 619.5 418.0 606.0C422.0 592.5 425.5 590.0 430.0 590.0C434.5 590.0 440.2 604.0 445.0 606.0C449.8 608.0 454.0 609.5 459.0 602.0C464.0 594.5 469.5 572.5 475.0 561.0C480.5 549.5 487.8 541.8 492.0 533.0C496.2 524.2 496.7 511.2 500.0 508.0C503.3 504.8 504.5 513.0 512.0 514.0C519.5 515.0 536.2 519.0 545.0 514.0C553.8 509.0 559.0 496.5 565.0 484.0C571.0 471.5 574.2 446.2 581.0 439.0C587.8 431.8 596.3 444.5 606.0 441.0C615.7 437.5 627.0 422.8 639.0 418.0C651.0 413.2 665.0 411.3 678.0 412.0C691.0 412.7 707.3 419.2 717.0 422.0C726.7 424.8 727.7 426.8 736.0 429.0C744.3 431.2 757.3 436.2 767.0 435.0C776.7 433.8 786.8 426.8 794.0 422.0C801.2 417.2 802.8 409.3 810.0 406.0C817.2 402.7 829.8 396.8 837.0 402.0C844.2 407.2 846.0 412.3 853.0 437.0C860.0 461.7 871.5 527.0 879.0 550.0C886.5 573.0 892.5 573.3 898.0 575.0C903.5 576.7 906.2 557.7 912.0 560.0C917.8 562.3 926.8 585.5 933.0 589.0C939.2 592.5 943.2 603.7 949.0 581.0C954.8 558.3 961.5 489.3 968.0 453.0C974.5 416.7 981.5 380.8 988.0 363.0C994.5 345.2 1002.2 346.0 1007.0 346.0C1011.8 346.0 1012.2 351.0 1017.0 363.0C1021.8 375.0 1029.5 401.8 1036.0 418.0C1042.5 434.2 1050.2 451.3 1056.0 460.0C1061.8 468.7 1065.8 466.7 1071.0 470.0C1076.2 473.3 1080.5 478.7 1087.0 480.0C1093.5 481.3 1101.7 478.3 1110.0 478.0C1118.3 477.7 1130.3 473.2 1137.0 478.0C1143.7 482.8 1144.8 507.2 1150.0 507.0C1155.2 506.8 1161.7 487.5 1168.0 477.0C1174.3 466.5 1182.2 455.8 1188.0 444.0C1193.8 432.2 1198.7 415.8 1203.0 406.0C1207.3 396.2 1211.0 385.0 1214.0 385.0C1217.0 385.0 1218.8 398.0 1221.0 406.0C1223.2 414.0 1224.5 421.2 1227.0 433.0C1229.5 444.8 1232.5 464.2 1236.0 477.0C1239.5 489.8 1243.5 503.0 1248.0 510.0C1252.5 517.0 1258.2 519.5 1263.0 519.0C1267.8 518.5 1272.7 512.5 1277.0 507.0C1281.3 501.5 1285.5 489.5 1289.0 486.0C1292.5 482.5 1294.5 482.5 1298.0 486.0C1301.5 489.5 1304.7 494.7 1310.0 507.0C1315.3 519.3 1321.7 547.8 1330.0 560.0C1338.3 572.2 1352.5 580.5 1360.0 580.0C1367.5 579.5 1368.3 555.8 1375.0 557.0C1381.7 558.2 1392.5 583.2 1400.0 587.0C1407.5 590.8 1413.3 587.8 1420.0 580.0C1426.7 572.2 1433.3 557.5 1440.0 540.0C1446.7 522.5 1453.3 452.5 1460.0 475.0C1466.7 497.5 1474.2 628.3 1480.0 675.0C1485.8 721.7 1490.0 737.5 1495.0 755.0C1500.0 772.5 1505.8 778.3 1510.0 780.0C1514.2 781.7 1514.2 774.2 1520.0 765.0C1525.8 755.8 1536.7 740.0 1545.0 725.0C1553.3 710.0 1563.3 685.5 1570.0 675.0C1576.7 664.5 1577.5 658.7 1585.0 662.0C1592.5 665.3 1607.5 695.3 1615.0 695.0C1622.5 694.7 1624.2 679.2 1630.0 660.0C1635.8 640.8 1643.3 605.0 1650.0 580.0C1656.7 555.0 1661.7 526.7 1670.0 510.0C1678.3 493.3 1690.8 477.5 1700.0 480.0C1709.2 482.5 1717.5 509.2 1725.0 525.0C1732.5 540.8 1737.5 572.5 1745.0 575.0C1752.5 577.5 1762.5 537.5 1770.0 540.0C1777.5 542.5 1781.7 581.8 1790.0 590.0C1798.3 598.2 1815.0 589.2 1820.0 589.0"/>
</g>
<path d="M1.5 591V623M5.5 575V608M9.5 586V605M13.5 580V605M17.5 586V627M21.5 581V617M25.5 582V612M29.5 593V632M33.5 604V624M37.5 603V630M41.5 607V626M45.5 589V637M49.5 590V661M53.5 592V614M57.5 580V619M61.5 570V593M65.5 554V582M69.5 560V595M73.5 541V583M77.5 509V554M81.5 521V543M85.5 518V552M89.5 518V531M93.5 523V552M97.5 540V561M101.5 539V571M105.5 542V570M109.5 552V600M113.5 539V590M117.5 535V559M121.5 506V550M125.5 511V533M129.5 496V536M133.5 507V545M137.5 524V561M141.5 527V579M145.5 532V572M149.5 542V571M153.5 540V564M157.5 555V682M161.5 578V619M165.5 590V623M169.5 517V621M173.5 539V594M177.5 547V567M181.5 556V587M185.5 562V620M189.5 584V619M193.5 585V668M197.5 613V649M201.5 630V660M205.5 595V666M209.5 556V627M213.5 549V607M217.5 526V584M221.5 510V541M225.5 507V549M229.5 507V552M233.5 450V548M237.5 476V532M241.5 522V580M245.5 576V651M249.5 637V667M253.5 643V672M257.5 642V686M261.5 626V664M265.5 621V663M269.5 589V658M273.5 534V606M277.5 532V574M281.5 532V574M285.5 557V573M289.5 544V591M293.5 534V579M297.5 534V580M301.5 529V597M305.5 561V615M309.5 540V588M313.5 555V592M317.5 585V618M321.5 597V624M325.5 596V654M329.5 607V654M333.5 637V694M337.5 635V671M341.5 598V656M345.5 593V656M349.5 584V638M353.5 575V614M357.5 485V600M361.5 507V541M365.5 531V548M369.5 543V567M373.5 541V573M377.5 537V571M381.5 549V565M385.5 539V588M389.5 546V580M393.5 519V563M397.5 531V561M401.5 517V555M405.5 535V553M409.5 536V554M413.5 531V564M417.5 525V575M421.5 533V575M425.5 497V543M429.5 482V513M433.5 471V510M437.5 447V489M441.5 415V459M445.5 427V452M449.5 419V451M453.5 418V445M457.5 422V451M461.5 424V449M465.5 432V464M469.5 445V471M473.5 444V477M477.5 458V497M481.5 465V509M485.5 451V494M489.5 459V495M493.5 463V499M497.5 460V481M501.5 407V490M505.5 388V433M509.5 395V425M513.5 387V421M517.5 378V410M521.5 379V437M525.5 394V433M529.5 385V414M533.5 401V428M537.5 413V431M541.5 410V458M545.5 411V443M549.5 401V428M553.5 389V420M557.5 375V406M561.5 377V419M565.5 398V432M569.5 403V419M573.5 390V413M577.5 398V447M581.5 391V433M585.5 388V435M589.5 388V422M593.5 368V410M597.5 376V407M601.5 379V407M605.5 345V397M609.5 347V365M613.5 346V371M617.5 338V366M621.5 334V365M625.5 327V358M629.5 306V363M633.5 327V360M637.5 337V363M641.5 336V382M645.5 354V417M649.5 359V386M653.5 318V371M657.5 351V405M661.5 365V395M665.5 347V385M669.5 350V384M673.5 362V410M677.5 365V386M681.5 362V385M685.5 372V387M689.5 373V389M693.5 371V393M697.5 367V385M701.5 348V391M705.5 328V368M709.5 333V370M713.5 339V395M717.5 373V402M721.5 378V417M725.5 391V410M729.5 388V416M733.5 396V442M737.5 383V424M741.5 370V404M745.5 363V404M749.5 367V400M753.5 374V389M757.5 367V390M761.5 358V375M765.5 345V388M769.5 333V370M773.5 328V371M777.5 340V389M781.5 355V375M785.5 349V382M789.5 356V368M793.5 346V381M797.5 350V393M801.5 361V404M805.5 379V405M809.5 363V383M813.5 369V380M817.5 365V381M821.5 349V385M825.5 361V377M829.5 339V372M833.5 322V378M837.5 334V375M841.5 365V430M845.5 413V440M849.5 420V451M853.5 439V461M857.5 440V472M861.5 455V482M865.5 470V488M869.5 463V508M873.5 486V520M877.5 496V550M881.5 500V530M885.5 517V523M889.5 508V522M893.5 470V518M897.5 446V487M901.5 448V479M905.5 437V476M909.5 376V458M913.5 356V402M917.5 360V376M921.5 331V383M925.5 305V347M929.5 313V347M933.5 293V327M937.5 294V323M941.5 295V322M945.5 286V308M949.5 299V315M953.5 296V319M957.5 310V326M961.5 308V354M965.5 320V341M969.5 324V357M973.5 313V353M977.5 293V324M981.5 298V318M985.5 289V328M989.5 287V324M993.5 293V313M997.5 287V314M1001.5 270V294M1005.5 281V318M1009.5 299V326M1013.5 308V359M1017.5 341V396M1021.5 370V403M1025.5 364V398M1029.5 345V384M1033.5 355V383M1037.5 359V396M1041.5 372V437M1045.5 407V433M1049.5 407V428M1053.5 409V442M1057.5 405V424M1061.5 389V422M1065.5 389V416M1069.5 368V419M1073.5 420V474M1077.5 460V486M1081.5 461V483M1085.5 458V489M1089.5 451V472M1093.5 433V468M1097.5 429V450M1101.5 415V444M1105.5 420V446M1109.5 410V430M1113.5 393V439M1117.5 384V415M1121.5 402V480M1125.5 400V432M1129.5 416V441M1133.5 411V424M1137.5 361V424M1141.5 312V390M1145.5 281V364M1149.5 306V351M1153.5 319V352M1157.5 322V360M1161.5 308V337M1165.5 326V351M1169.5 331V367M1173.5 317V374M1177.5 322V342M1181.5 326V350M1185.5 335V358M1189.5 280V353M1193.5 298V336M1197.5 312V336M1201.5 297V337M1205.5 304V341M1209.5 305V343M1213.5 319V375M1217.5 347V381M1221.5 346V441M1225.5 423V440M1229.5 416V448M1233.5 429V451M1237.5 439V492M1241.5 428V461M1245.5 452V483M1249.5 449V485M1253.5 438V473M1257.5 417V452M1261.5 421V452M1265.5 419V440M1269.5 410V434M1273.5 413V428M1277.5 413V440M1281.5 415V431M1285.5 410V443M1289.5 373V448M1293.5 407V436M1297.5 403V470M1301.5 434V466M1305.5 462V492M1309.5 475V520M1313.5 495V584M1317.5 521V540M1321.5 516V544M1325.5 521V539M1329.5 513V539M1333.5 475V524M1337.5 504V536M1341.5 496V526M1345.5 493V516M1349.5 509V537M1353.5 500V544M1357.5 521V533M1361.5 518V551M1365.5 520V550M1369.5 517V534M1373.5 504V543M1377.5 511V528M1381.5 479V535M1385.5 456V502M1389.5 409V477M1393.5 405V426M1397.5 388V417M1401.5 383V430M1405.5 397V436M1409.5 376V486M1413.5 394V415M1417.5 396V432M1421.5 421V445M1425.5 410V449M1429.5 425V434M1433.5 415V435M1437.5 418V433M1441.5 415V427M1445.5 410V432M1449.5 424V445M1453.5 428V447M1457.5 426V475M1461.5 451V478M1465.5 462V513M1469.5 477V518M1473.5 493V604M1477.5 585V625M1481.5 611V646M1485.5 626V658M1489.5 650V722M1493.5 679V716M1497.5 682V711M1501.5 625V684M1505.5 602V653M1509.5 598V638M1513.5 573V623M1517.5 551V595M1521.5 572V597M1525.5 560V594M1529.5 583V598M1533.5 590V613M1537.5 580V612M1541.5 598V629M1545.5 616V656M1549.5 639V666M1553.5 605V670M1557.5 606V642M1561.5 610V627M1565.5 597V635M1569.5 592V630M1573.5 560V599M1577.5 524V570M1581.5 525V544M1585.5 507V546M1589.5 499V541M1593.5 489V515M1597.5 482V505M1601.5 481V507M1605.5 454V489M1609.5 445V472M1613.5 429V462M1617.5 418V447M1621.5 397V430M1625.5 393V427M1629.5 393V433M1633.5 417V435M1637.5 419V441M1641.5 420V441M1645.5 431V450M1649.5 414V456M1653.5 384V446M1657.5 386V412M1661.5 377V400M1665.5 358V398M1669.5 362V396M1673.5 344V391M1677.5 337V381M1681.5 330V369M1685.5 323V357M1689.5 345V391M1693.5 364V401M1697.5 382V430M1701.5 418V447M1705.5 429V493M1709.5 457V497M1713.5 445V488M1717.5 463V491M1721.5 468V491M1725.5 452V486M1729.5 479V512M1733.5 491V532M1737.5 497V536M1741.5 522V545M1745.5 510V543M1749.5 479V516M1753.5 474V496M1757.5 463V498M1761.5 464V486M1765.5 471V484M1769.5 438V498M1773.5 477V507M1777.5 498V524M1781.5 509V551M1785.5 541V558M1789.5 530V578M1793.5 548V602M1797.5 480V556M1801.5 494V535M1805.5 504V541M1809.5 495V521M1813.5 491V536M1817.5 510V538M1821.5 509V521" stroke="#00BFFF" stroke-width="1" fill="none" shape-rendering="crispEdges"/>
<path d="M0 593h3v12h-3zM4 593h3v11h-3zM8 588h3v13h-3zM12 582h3v19h-3zM16 587h3v30h-3zM20 585h3v32h-3zM24 585h3v21h-3zM28 599h3v15h-3zM32 607h3v15h-3zM36 611h3v17h-3zM40 607h3v15h-3zM44 597h3v26h-3zM48 596h3v20h-3zM52 596h3v16h-3zM56 588h3v17h-3zM60 572h3v19h-3zM64 562h3v17h-3zM68 562h3v15h-3zM72 549h3v26h-3zM76 539h3v13h-3zM80 535h3v6h-3zM84 524h3v14h-3zM88 526h3v5h-3zM92 531h3v18h-3zM96 544h3v11h-3zM100 549h3v8h-3zM104 560h3v4h-3zM108 562h3v20h-3zM112 549h3v33h-3zM116 539h3v17h-3zM120 513h3v33h-3zM124 514h3v13h-3zM128 514h3v14h-3zM132 515h3v27h-3zM136 542h3v19h-3zM140 545h3v24h-3zM144 546h3v16h-3zM148 546h3v11h-3zM152 548h3v16h-3zM156 573h3v12h-3zM160 578h3v39h-3zM164 593h3v24h-3zM168 580h3v27h-3zM172 553h3v27h-3zM176 553h3v12h-3zM180 562h3v11h-3zM184 565h3v37h-3zM188 602h3v9h-3zM192 603h3v16h-3zM196 619h3v28h-3zM200 638h3v19h-3zM204 599h3v49h-3zM208 560h3v63h-3zM212 553h3v50h-3zM216 534h3v50h-3zM220 524h3v11h-3zM224 515h3v20h-3zM228 515h3v29h-3zM232 492h3v52h-3zM236 490h3v42h-3zM240 530h3v48h-3zM244 578h3v63h-3zM248 641h3v12h-3zM252 653h3v11h-3zM256 652h3v12h-3zM260 629h3v32h-3zM264 635h3v25h-3zM268 603h3v47h-3zM272 552h3v51h-3zM276 534h3v22h-3zM280 535h3v29h-3zM284 561h3v12h-3zM288 550h3v23h-3zM292 540h3v21h-3zM296 542h3v24h-3zM300 547h3v40h-3zM304 564h3v33h-3zM308 558h3v30h-3zM312 558h3v34h-3zM316 588h3v16h-3zM320 597h3v19h-3zM324 614h3v22h-3zM328 625h3v29h-3zM332 639h3v19h-3zM336 637h3v20h-3zM340 616h3v36h-3zM344 611h3v31h-3zM348 602h3v30h-3zM352 579h3v21h-3zM356 509h3v81h-3zM360 509h3v28h-3zM364 537h3v9h-3zM368 546h3v13h-3zM372 544h3v15h-3zM376 547h3v10h-3zM380 553h3v9h-3zM384 557h3v15h-3zM388 550h3v22h-3zM392 531h3v24h-3zM396 531h3v20h-3zM400 535h3v18h-3zM404 539h3v12h-3zM408 539h3v9h-3zM412 541h3v17h-3zM416 543h3v18h-3zM420 533h3v17h-3zM424 499h3v38h-3zM428 488h3v23h-3zM432 475h3v33h-3zM436 449h3v26h-3zM440 433h3v16h-3zM444 433h3v16h-3zM448 424h3v25h-3zM452 424h3v21h-3zM456 428h3v17h-3zM460 428h3v15h-3zM464 438h3v18h-3zM468 451h3v20h-3zM472 462h3v11h-3zM476 462h3v21h-3zM480 475h3v12h-3zM484 469h3v19h-3zM488 467h3v24h-3zM492 466h3v23h-3zM496 463h3v18h-3zM500 413h3v67h-3zM504 398h3v17h-3zM508 399h3v20h-3zM512 390h3v28h-3zM516 386h3v16h-3zM520 397h3v32h-3zM524 400h3v29h-3zM528 395h3v17h-3zM532 405h3v19h-3zM536 419h3v10h-3zM540 420h3v11h-3zM544 413h3v12h-3zM548 411h3v9h-3zM552 403h3v14h-3zM556 392h3v14h-3zM560 395h3v14h-3zM564 401h3v13h-3zM568 403h3v12h-3zM572 398h3v13h-3zM576 398h3v21h-3zM580 405h3v22h-3zM584 390h3v27h-3zM588 390h3v14h-3zM592 382h3v22h-3zM596 382h3v21h-3zM600 383h3v20h-3zM604 359h3v24h-3zM608 353h3v12h-3zM612 348h3v20h-3zM616 344h3v19h-3zM620 334h3v17h-3zM624 331h3v13h-3zM628 338h3v11h-3zM632 345h3v11h-3zM636 351h3v12h-3zM640 354h3v14h-3zM644 364h3v20h-3zM648 363h3v21h-3zM652 352h3v13h-3zM656 354h3v33h-3zM660 367h3v20h-3zM664 361h3v14h-3zM668 364h3v6h-3zM672 365h3v15h-3zM676 373h3v13h-3zM680 372h3v11h-3zM684 376h3v11h-3zM688 381h3v6h-3zM692 373h3v12h-3zM696 373h3v12h-3zM700 348h3v37h-3zM704 342h3v16h-3zM708 341h3v19h-3zM712 349h3v28h-3zM716 373h3v19h-3zM720 384h3v19h-3zM724 394h3v13h-3zM728 394h3v16h-3zM732 402h3v22h-3zM736 401h3v13h-3zM740 373h3v29h-3zM744 377h3v9h-3zM748 381h3v9h-3zM752 376h3v10h-3zM756 371h3v11h-3zM760 362h3v13h-3zM764 355h3v15h-3zM768 342h3v20h-3zM772 342h3v23h-3zM776 358h3v13h-3zM780 359h3v14h-3zM784 359h3v9h-3zM788 356h3v9h-3zM792 360h3v7h-3zM796 360h3v15h-3zM800 375h3v15h-3zM804 382h3v5h-3zM808 377h3v4h-3zM812 369h3v11h-3zM816 365h3v10h-3zM820 367h3v8h-3zM824 363h3v8h-3zM828 349h3v17h-3zM832 341h3v19h-3zM836 348h3v21h-3zM840 369h3v47h-3zM844 413h3v17h-3zM848 426h3v25h-3zM852 449h3v10h-3zM856 450h3v14h-3zM860 463h3v9h-3zM864 470h3v12h-3zM868 481h3v25h-3zM872 492h3v24h-3zM876 500h3v15h-3zM880 514h3v13h-3zM884 517h3v3h-3zM888 508h3v10h-3zM892 473h3v35h-3zM896 456h3v17h-3zM900 450h3v27h-3zM904 445h3v27h-3zM908 394h3v50h-3zM912 366h3v28h-3zM916 362h3v14h-3zM920 333h3v42h-3zM924 323h3v20h-3zM928 319h3v18h-3zM932 307h3v16h-3zM936 298h3v17h-3zM940 297h3v15h-3zM944 296h3v12h-3zM948 299h3v10h-3zM952 304h3v7h-3zM956 310h3v10h-3zM960 316h3v22h-3zM964 322h3v19h-3zM968 326h3v17h-3zM972 327h3v16h-3zM976 307h3v14h-3zM980 304h3v12h-3zM984 297h3v17h-3zM988 289h3v17h-3zM992 297h3v6h-3zM996 287h3v13h-3zM1000 281h3v11h-3zM1004 287h3v29h-3zM1008 313h3v10h-3zM1012 318h3v27h-3zM1016 345h3v33h-3zM1020 372h3v25h-3zM1024 370h3v20h-3zM1028 359h3v21h-3zM1032 361h3v18h-3zM1036 369h3v21h-3zM1040 390h3v29h-3zM1044 409h3v10h-3zM1048 409h3v19h-3zM1052 413h3v15h-3zM1056 411h3v9h-3zM1060 393h3v25h-3zM1064 392h3v10h-3zM1068 402h3v15h-3zM1072 428h3v42h-3zM1076 460h3v11h-3zM1080 461h3v18h-3zM1084 466h3v13h-3zM1088 454h3v12h-3zM1092 433h3v21h-3zM1096 431h3v9h-3zM1100 433h3v9h-3zM1104 426h3v10h-3zM1108 420h3v10h-3zM1112 401h3v28h-3zM1116 392h3v19h-3zM1120 402h3v10h-3zM1124 410h3v20h-3zM1128 424h3v3h-3zM1132 414h3v10h-3zM1136 364h3v50h-3zM1140 320h3v52h-3zM1144 317h3v29h-3zM1148 316h3v21h-3zM1152 323h3v23h-3zM1156 322h3v24h-3zM1160 318h3v17h-3zM1164 329h3v18h-3zM1168 335h3v18h-3zM1172 327h3v16h-3zM1176 325h3v13h-3zM1180 330h3v20h-3zM1184 335h3v15h-3zM1188 304h3v31h-3zM1192 304h3v22h-3zM1196 316h3v10h-3zM1200 315h3v8h-3zM1204 318h3v9h-3zM1208 319h3v21h-3zM1212 329h3v44h-3zM1216 355h3v24h-3zM1220 364h3v59h-3zM1224 423h3v14h-3zM1228 434h3v12h-3zM1232 439h3v9h-3zM1236 441h3v8h-3zM1240 442h3v13h-3zM1244 455h3v24h-3zM1248 457h3v22h-3zM1252 444h3v15h-3zM1256 431h3v17h-3zM1260 425h3v19h-3zM1264 423h3v14h-3zM1268 416h3v10h-3zM1272 419h3v7h-3zM1276 421h3v5h-3zM1280 417h3v8h-3zM1284 420h3v15h-3zM1288 420h3v20h-3zM1292 411h3v22h-3zM1296 409h3v43h-3zM1300 442h3v24h-3zM1304 466h3v23h-3zM1308 485h3v17h-3zM1312 495h3v27h-3zM1316 521h3v19h-3zM1320 524h3v14h-3zM1324 525h3v4h-3zM1328 517h3v14h-3zM1332 507h3v17h-3zM1336 507h3v15h-3zM1340 499h3v21h-3zM1344 499h3v17h-3zM1348 517h3v6h-3zM1352 518h3v12h-3zM1356 521h3v12h-3zM1360 522h3v10h-3zM1364 520h3v12h-3zM1368 521h3v10h-3zM1372 522h3v11h-3zM1376 517h3v9h-3zM1380 479h3v42h-3zM1384 466h3v22h-3zM1388 423h3v51h-3zM1392 409h3v17h-3zM1396 394h3v23h-3zM1400 393h3v19h-3zM1404 403h3v29h-3zM1408 394h3v38h-3zM1412 398h3v14h-3zM1416 404h3v24h-3zM1420 425h3v10h-3zM1424 428h3v7h-3zM1428 425h3v9h-3zM1432 421h3v10h-3zM1436 421h3v9h-3zM1440 417h3v8h-3zM1444 417h3v7h-3zM1448 424h3v21h-3zM1452 428h3v17h-3zM1456 428h3v39h-3zM1460 469h3v7h-3zM1464 472h3v39h-3zM1468 477h3v41h-3zM1472 495h3v103h-3zM1476 589h3v30h-3zM1480 611h3v27h-3zM1484 632h3v26h-3zM1488 658h3v47h-3zM1492 693h3v17h-3zM1496 682h3v19h-3zM1500 643h3v39h-3zM1504 620h3v29h-3zM1508 604h3v32h-3zM1512 591h3v28h-3zM1516 575h3v20h-3zM1520 575h3v8h-3zM1524 578h3v10h-3zM1528 587h3v7h-3zM1532 592h3v7h-3zM1536 598h3v12h-3zM1540 608h3v11h-3zM1544 618h3v28h-3zM1548 643h3v12h-3zM1552 623h3v29h-3zM1556 610h3v18h-3zM1560 610h3v9h-3zM1564 611h3v6h-3zM1568 595h3v21h-3zM1572 566h3v29h-3zM1576 538h3v28h-3zM1580 528h3v13h-3zM1584 525h3v13h-3zM1588 507h3v30h-3zM1592 491h3v21h-3zM1596 492h3v10h-3zM1600 487h3v14h-3zM1604 458h3v29h-3zM1608 449h3v13h-3zM1612 429h3v23h-3zM1616 422h3v7h-3zM1620 420h3v7h-3zM1624 403h3v24h-3zM1628 403h3v20h-3zM1632 421h3v11h-3zM1636 427h3v8h-3zM1640 430h3v7h-3zM1644 434h3v9h-3zM1648 428h3v14h-3zM1652 394h3v34h-3zM1656 389h3v15h-3zM1660 391h3v7h-3zM1664 376h3v18h-3zM1668 366h3v12h-3zM1672 358h3v15h-3zM1676 351h3v12h-3zM1680 338h3v13h-3zM1684 337h3v16h-3zM1688 348h3v33h-3zM1692 372h3v29h-3zM1696 392h3v28h-3zM1700 420h3v17h-3zM1704 437h3v50h-3zM1708 463h3v24h-3zM1712 463h3v21h-3zM1716 477h3v10h-3zM1720 470h3v17h-3zM1724 470h3v12h-3zM1728 482h3v22h-3zM1732 501h3v17h-3zM1736 515h3v18h-3zM1740 526h3v13h-3zM1744 516h3v17h-3zM1748 493h3v23h-3zM1752 482h3v10h-3zM1756 477h3v11h-3zM1760 472h3v11h-3zM1764 471h3v11h-3zM1768 472h3v8h-3zM1772 477h3v30h-3zM1776 504h3v14h-3zM1780 512h3v35h-3zM1784 544h3v10h-3zM1788 548h3v27h-3zM1792 550h3v25h-3zM1796 528h3v14h-3zM1800 512h3v21h-3zM1804 506h3v17h-3zM1808 505h3v12h-3zM1812 505h3v17h-3zM1816 513h3v11h-3zM1820 509h3v9h-3z" fill="#00BFFF" shape-rendering="crispEdges"/>
<path d="M5.0 533.0C9.7 536.3 24.3 548.0 33.0 553.0C41.7 558.0 49.7 561.5 57.0 563.0C64.3 564.5 70.3 563.0 77.0 562.0C83.7 561.0 91.0 557.3 97.0 557.0C103.0 556.7 107.0 560.5 113.0 560.0C119.0 559.5 126.3 554.8 133.0 554.0C139.7 553.2 148.0 554.0 153.0 555.0C158.0 556.0 158.0 558.8 163.0 560.0C168.0 561.2 176.0 559.5 183.0 562.0C190.0 564.5 196.7 574.8 205.0 575.0C213.3 575.2 227.2 565.0 233.0 563.0C238.8 561.0 235.0 560.2 240.0 563.0C245.0 565.8 255.2 578.0 263.0 580.0C270.8 582.0 280.8 576.0 287.0 575.0C293.2 574.0 293.8 572.8 300.0 574.0C306.2 575.2 315.8 579.2 324.0 582.0C332.2 584.8 341.5 591.0 349.0 591.0C356.5 591.0 360.8 584.8 369.0 582.0C377.2 579.2 389.8 576.5 398.0 574.0C406.2 571.5 411.2 571.2 418.0 567.0C424.8 562.8 431.5 555.0 439.0 549.0C446.5 543.0 454.2 536.2 463.0 531.0C471.8 525.8 483.2 523.5 492.0 518.0C500.8 512.5 507.2 504.3 516.0 498.0C524.8 491.7 536.2 485.5 545.0 480.0C553.8 474.5 560.8 469.8 569.0 465.0C577.2 460.2 585.7 457.7 594.0 451.0C602.3 444.3 611.5 430.8 619.0 425.0C626.5 419.2 632.5 419.2 639.0 416.0C645.5 412.8 651.5 408.3 658.0 406.0C664.5 403.7 671.5 403.3 678.0 402.0C684.5 400.7 691.2 399.7 697.0 398.0C702.8 396.3 707.2 392.7 713.0 392.0C718.8 391.3 724.3 394.0 732.0 394.0C739.7 394.0 751.2 393.2 759.0 392.0C766.8 390.8 771.8 388.5 779.0 387.0C786.2 385.5 793.0 384.2 802.0 383.0C811.0 381.8 824.5 378.7 833.0 380.0C841.5 381.3 846.5 386.7 853.0 391.0C859.5 395.3 865.0 400.0 872.0 406.0C879.0 412.0 886.5 425.0 895.0 427.0C903.5 429.0 914.3 423.2 923.0 418.0C931.7 412.8 939.2 402.2 947.0 396.0C954.8 389.8 962.3 385.8 970.0 381.0C977.7 376.2 986.2 370.7 993.0 367.0C999.8 363.3 1004.5 359.5 1011.0 359.0C1017.5 358.5 1023.3 361.2 1032.0 364.0C1040.7 366.8 1054.5 371.5 1063.0 376.0C1071.5 380.5 1075.8 387.3 1083.0 391.0C1090.2 394.7 1097.0 396.5 1106.0 398.0C1115.0 399.5 1129.7 400.8 1137.0 400.0C1144.3 399.2 1142.8 397.0 1150.0 393.0C1157.2 389.0 1170.2 380.5 1180.0 376.0C1189.8 371.5 1199.2 364.2 1209.0 366.0C1218.8 367.8 1229.2 382.3 1239.0 387.0C1248.8 391.7 1260.7 391.7 1268.0 394.0C1275.3 396.3 1276.0 397.0 1283.0 401.0C1290.0 405.0 1303.0 412.8 1310.0 418.0C1317.0 423.2 1318.3 426.7 1325.0 432.0C1331.7 437.3 1340.8 444.2 1350.0 450.0C1359.2 455.8 1370.8 465.8 1380.0 467.0C1389.2 468.2 1396.7 459.7 1405.0 457.0C1413.3 454.3 1422.5 452.3 1430.0 451.0C1437.5 449.7 1443.3 448.0 1450.0 449.0C1456.7 450.0 1463.3 450.2 1470.0 457.0C1476.7 463.8 1484.2 480.0 1490.0 490.0C1495.8 500.0 1498.3 510.0 1505.0 517.0C1511.7 524.0 1522.5 527.0 1530.0 532.0C1537.5 537.0 1543.3 542.8 1550.0 547.0C1556.7 551.2 1563.3 555.7 1570.0 557.0C1576.7 558.3 1583.3 558.3 1590.0 555.0C1596.7 551.7 1602.5 544.2 1610.0 537.0C1617.5 529.8 1626.7 519.0 1635.0 512.0C1643.3 505.0 1651.7 502.8 1660.0 495.0C1668.3 487.2 1678.3 470.8 1685.0 465.0C1691.7 459.2 1694.2 460.5 1700.0 460.0C1705.8 459.5 1712.5 460.0 1720.0 462.0C1727.5 464.0 1736.7 470.3 1745.0 472.0C1753.3 473.7 1761.7 469.0 1770.0 472.0C1778.3 475.0 1786.7 486.2 1795.0 490.0C1803.3 493.8 1815.8 494.2 1820.0 495.0" fill="none" stroke="#000" stroke-width="2.4"/>
<circle cx="17" cy="581" r="6" fill="#FFFF00"/><text x="17" y="584.7" class="d1">1</text><circle cx="48" cy="666" r="6" fill="#FFFF00"/><text x="48" y="669.7" class="d1">1</text><circle cx="77" cy="502" r="7.7" fill="#32CD32"/><text x="77" y="505.8" class="d2">2</text><circle cx="121" cy="501" r="6" fill="#FFFF00"/><text x="121" y="504.7" class="d1">1</text><circle cx="108" cy="598" r="6" fill="#FFFF00"/><text x="108" y="601.7" class="d1">1</text><circle cx="168" cy="512" r="6" fill="#FFFF00"/><text x="168" y="515.7" class="d1">1</text><circle cx="157" cy="693" r="11.5" fill="#FF0000"/><text x="157" y="700" class="d3">3</text><circle cx="192" cy="673" r="6" fill="#FFFF00"/><text x="192" y="676.7" class="d1">1</text><circle cx="233" cy="439" r="11.5" fill="#FF0000"/><text x="233" y="446" class="d3">3</text><circle cx="256" cy="693" r="7.7" fill="#32CD32"/><text x="256" y="696.8" class="d2">2</text><circle cx="300" cy="530" r="7.7" fill="#32CD32"/><text x="300" y="533.8" class="d2">2</text><circle cx="333" cy="704" r="11.5" fill="#FF0000"/><text x="333" y="711" class="d3">3</text><circle cx="357" cy="480" r="6" fill="#FFFF00"/><text x="357" y="483.7" class="d1">1</text><circle cx="384" cy="593" r="6" fill="#FFFF00"/><text x="384" y="596.7" class="d1">1</text><circle cx="393" cy="514" r="6" fill="#FFFF00"/><text x="393" y="517.7" class="d1">1</text><circle cx="421" cy="580" r="6" fill="#FFFF00"/><text x="421" y="583.7" class="d1">1</text><circle cx="449" cy="412" r="7.7" fill="#32CD32"/><text x="449" y="415.8" class="d2">2</text><circle cx="481" cy="516" r="7.7" fill="#32CD32"/><text x="481" y="519.8" class="d2">2</text><circle cx="516" cy="375" r="6" fill="#FFFF00"/><text x="516" y="378.7" class="d1">1</text><circle cx="540" cy="463" r="6" fill="#FFFF00"/><text x="540" y="466.7" class="d1">1</text><circle cx="556" cy="370" r="6" fill="#FFFF00"/><text x="556" y="373.7" class="d1">1</text><circle cx="576" cy="452" r="6" fill="#FFFF00"/><text x="576" y="455.7" class="d1">1</text><circle cx="628" cy="295" r="11.5" fill="#FF0000"/><text x="628" y="302" class="d3">3</text><circle cx="645" cy="424" r="7.7" fill="#32CD32"/><text x="645" y="427.8" class="d2">2</text><circle cx="652" cy="313" r="6" fill="#FFFF00"/><text x="652" y="316.7" class="d1">1</text><circle cx="673" cy="415" r="6" fill="#FFFF00"/><text x="673" y="418.7" class="d1">1</text><circle cx="704" cy="321" r="7.7" fill="#32CD32"/><text x="704" y="324.8" class="d2">2</text><circle cx="732" cy="453" r="11.5" fill="#FF0000"/><text x="732" y="460" class="d3">3</text><circle cx="768" cy="328" r="6" fill="#FFFF00"/><text x="768" y="331.7" class="d1">1</text><circle cx="800" cy="409" r="6" fill="#FFFF00"/><text x="800" y="412.7" class="d1">1</text><circle cx="832" cy="312" r="11.5" fill="#FF0000"/><text x="832" y="319" class="d3">3</text><circle cx="876" cy="560" r="11.5" fill="#FF0000"/><text x="876" y="567" class="d3">3</text><circle cx="941" cy="290" r="6" fill="#FFFF00"/><text x="941" y="293.7" class="d1">1</text><circle cx="961" cy="359" r="6" fill="#FFFF00"/><text x="961" y="362.7" class="d1">1</text><circle cx="1000" cy="260" r="11.5" fill="#FF0000"/><text x="1000" y="267" class="d3">3</text><circle cx="1045" cy="436" r="6" fill="#FFFF00"/><text x="1045" y="439.7" class="d1">1</text><circle cx="1068" cy="363" r="6" fill="#FFFF00"/><text x="1068" y="366.7" class="d1">1</text><circle cx="1076" cy="496" r="11.5" fill="#FF0000"/><text x="1076" y="503" class="d3">3</text><circle cx="1117" cy="387" r="6" fill="#FFFF00"/><text x="1117" y="390.7" class="d1">1</text><circle cx="1120" cy="485" r="6" fill="#FFFF00"/><text x="1120" y="488.7" class="d1">1</text><circle cx="1144" cy="276" r="6" fill="#FFFF00"/><text x="1144" y="279.7" class="d1">1</text><circle cx="1173" cy="379" r="6" fill="#FFFF00"/><text x="1173" y="382.7" class="d1">1</text><circle cx="1188" cy="269" r="11.5" fill="#FF0000"/><text x="1188" y="276" class="d3">3</text><circle cx="1236" cy="499" r="7.7" fill="#32CD32"/><text x="1236" y="502.8" class="d2">2</text><circle cx="1288" cy="366" r="7.7" fill="#32CD32"/><text x="1288" y="369.8" class="d2">2</text><circle cx="1312" cy="591" r="7.7" fill="#32CD32"/><text x="1312" y="594.8" class="d2">2</text><circle cx="1332" cy="470" r="6" fill="#FFFF00"/><text x="1332" y="473.7" class="d1">1</text><circle cx="1360" cy="556" r="6" fill="#FFFF00"/><text x="1360" y="559.7" class="d1">1</text><circle cx="1400" cy="376" r="7.7" fill="#32CD32"/><text x="1400" y="379.8" class="d2">2</text><circle cx="1407" cy="491" r="6" fill="#FFFF00"/><text x="1407" y="494.7" class="d1">1</text><circle cx="1444" cy="405" r="6" fill="#FFFF00"/><text x="1444" y="408.7" class="d1">1</text><circle cx="1488" cy="733" r="11.5" fill="#FF0000"/><text x="1488" y="740" class="d3">3</text><circle cx="1516" cy="546" r="6" fill="#FFFF00"/><text x="1516" y="549.7" class="d1">1</text><circle cx="1548" cy="671" r="6" fill="#FFFF00"/><text x="1548" y="674.7" class="d1">1</text><circle cx="1621" cy="392" r="6" fill="#FFFF00"/><text x="1621" y="395.7" class="d1">1</text><circle cx="1644" cy="455" r="6" fill="#FFFF00"/><text x="1644" y="458.7" class="d1">1</text><circle cx="1684" cy="317" r="11.5" fill="#FF0000"/><text x="1684" y="324" class="d3">3</text><circle cx="1740" cy="548" r="7.7" fill="#32CD32"/><text x="1740" y="551.8" class="d2">2</text><circle cx="1768" cy="431" r="7.7" fill="#32CD32"/><text x="1768" y="434.8" class="d2">2</text><circle cx="1792" cy="613" r="11.5" fill="#FF0000"/><text x="1792" y="620" class="d3">3</text><circle cx="1797" cy="475" r="6" fill="#FFFF00"/><text x="1797" y="478.7" class="d1">1</text>
<g class="ax"><text x="1878" y="115" class="pl">0.67710</text><text x="1878" y="148" class="pl">0.67610</text><text x="1878" y="181" class="pl">0.67510</text><text x="1878" y="215" class="pl">0.67405</text><text x="1878" y="248" class="pl">0.67305</text><text x="1878" y="281" class="pl">0.67205</text><text x="1878" y="314" class="pl">0.67105</text><text x="1878" y="348" class="pl">0.67000</text><text x="1878" y="381" class="pl">0.66900</text><text x="1878" y="414" class="pl">0.66800</text><text x="1878" y="447" class="pl">0.66700</text><text x="1878" y="481" class="pl">0.66595</text><text x="1878" y="514" class="pl">0.66495</text><text x="1878" y="547" class="pl">0.66395</text><text x="1878" y="580" class="pl">0.66290</text><text x="1878" y="614" class="pl">0.66190</text><text x="1878" y="647" class="pl">0.66090</text><text x="1878" y="680" class="pl">0.65990</text><text x="1878" y="713" class="pl">0.65885</text><text x="1878" y="747" class="pl">0.65785</text><text x="1878" y="780" class="pl">0.65685</text><text x="1878" y="813" class="pl">0.65585</text><text x="1878" y="846" class="pl">0.65480</text><text x="1878" y="880" class="pl">0.65380</text></g>
<g class="ax"><text x="4.5" y="1000" class="dl">12 Jul 2022</text><text x="68.5" y="1000" class="dl">12 Jul 16:00</text><text x="132.5" y="1000" class="dl">13 Jul 09:00</text><text x="196.5" y="1000" class="dl">14 Jul 01:00</text><text x="260.5" y="1000" class="dl">14 Jul 17:00</text><text x="324.5" y="1000" class="dl">15 Jul 09:00</text><text x="388.5" y="1000" class="dl">18 Jul 01:00</text><text x="452.5" y="1000" class="dl">18 Jul 17:00</text><text x="516.5" y="1000" class="dl">19 Jul 09:00</text><text x="580.5" y="1000" class="dl">20 Jul 01:00</text><text x="644.5" y="1000" class="dl">20 Jul 17:00</text><text x="708.5" y="1000" class="dl">21 Jul 09:00</text><text x="772.5" y="1000" class="dl">22 Jul 01:00</text><text x="836.5" y="1000" class="dl">22 Jul 17:00</text><text x="900.5" y="1000" class="dl">25 Jul 09:00</text><text x="964.5" y="1000" class="dl">26 Jul 01:00</text><text x="1028.5" y="1000" class="dl">26 Jul 17:00</text><text x="1092.5" y="1000" class="dl">27 Jul 09:00</text><text x="1156.5" y="1000" class="dl">28 Jul 01:00</text><text x="1220.5" y="1000" class="dl">28 Jul 17:00</text><text x="1284.5" y="1000" class="dl">29 Jul 09:00</text><text x="1348.5" y="1000" class="dl">1 Aug 01:00</text><text x="1412.5" y="1000" class="dl">1 Aug 17:00</text><text x="1476.5" y="1000" class="dl">2 Aug 09:00</text><text x="1540.5" y="1000" class="dl">3 Aug 01:00</text><text x="1604.5" y="1000" class="dl">3 Aug 17:00</text><text x="1668.5" y="1000" class="dl">4 Aug 09:00</text><text x="1732.5" y="1000" class="dl">5 Aug 01:00</text><text x="1796.5" y="1000" class="dl">5 Aug 17:00</text></g>
<g class="ax"><text x="1878" y="895">100</text><text x="1878" y="909">80</text><text x="1878" y="970">20</text><text x="1878" y="985">0</text></g>
<text x="20.5" y="113" class="ax" style="font-size:9px">AUDCHF,H1</text>
<path d="M9 107h7l-3.5 4z" fill="#DCDCF8"/>
<path d="M1493 101.5h9l-4.5 5.5z" fill="#E0E0F8"/>
<text x="9" y="126" class="ax" style="font-size:9.2px">05:01 left to bar end</text>
<text x="8" y="897" class="ax">Swami CCI 42,1029</text>
<text x="59" y="870" class="big">hours / stops / news</text>
<rect x="1874" y="512" width="41" height="19" fill="#E2E2F6"/>
<text x="1877" y="521" class="axw">0.66477</text><text x="1877" y="530" class="axw">0.66456</text>
<svg x="1840" y="505" width="32" height="22"><text x="7" y="19" class="cd">05:01</text></svg>
</svg>
<div id="title" class="abs">
  <svg class="abs" style="left:2px;top:3px" width="18" height="18" viewBox="0 0 18 18"><circle cx="9" cy="9" r="8" fill="#2BAA62"/><path d="M9 4a5 5 0 1 0 0 10" stroke="#fff" stroke-width="2.4" fill="none"/><path d="M10 7h5M10 10h5" stroke="#fff" stroke-width="1.4"/></svg>
  <div class="abs t">2101376030: FTMO-Demo - Demo Account - FTMO S.R.O. - [AUDCHF,H1]</div>
  <svg class="abs" style="left:1780px;top:0" width="140" height="23"><path d="M19 10.5h10" stroke="#000" stroke-width="1"/><rect x="63.5" y="6.5" width="8" height="8" rx="1.5" fill="none" stroke="#000"/><path d="M65.5 4.5h6.5a1.5 1.5 0 0 1 1.5 1.5v6.5" fill="none" stroke="#000"/><path d="M110 5l10 10M120 5l-10 10" stroke="#000" stroke-width="1"/></svg>
</div>
<div id="menu" class="abs">
  <svg class="abs" style="left:4px;top:2px" width="16" height="16"><rect x="1.5" y="1.5" width="11" height="8" fill="#fff" stroke="#3A78C8"/><rect x="4.5" y="6.5" width="11" height="9" fill="#fff" stroke="#3A78C8"/><path d="M6 12l2-2 2 2 2-2 2 2" stroke="#3A78C8" fill="none"/></svg>
  <span style="left:28px">File</span><span style="left:64px">View</span><span style="left:107px">Insert</span><span style="left:155px">Charts</span><span style="left:206px">Tools</span><span style="left:251px">Window</span><span style="left:313px">Help</span>
  <svg class="abs" style="left:1862px;top:2px" width="58" height="18"><rect x="2.5" y="1.5" width="15" height="15" fill="#F8F8F8" stroke="#E4E4E4"/><path d="M6 11.5h5" stroke="#5A6E88" stroke-width="1.6"/><rect x="21.5" y="1.5" width="15" height="15" fill="#F8F8F8" stroke="#E4E4E4"/><path d="M24.5 7.5h5v4h-5zM26.5 5.5h5v4" fill="none" stroke="#5A6E88" stroke-width="1.2"/><rect x="40.5" y="1.5" width="15" height="15" fill="#F8F8F8" stroke="#E4E4E4"/><path d="M44.5 6l5 5M49.5 6l-5 5" stroke="#5A6E88" stroke-width="1.8"/></svg>
</div>
<div id="tb1" class="abs">
  <svg class="abs" style="left:0;top:0" width="880" height="27" viewBox="0 0 880 27">
    <g fill="#888"><rect x="2" y="5" width="3" height="1"/><rect x="2" y="7" width="3" height="1"/><rect x="2" y="9" width="3" height="1"/><rect x="2" y="11" width="3" height="1"/><rect x="2" y="13" width="3" height="1"/><rect x="2" y="15" width="3" height="1"/><rect x="2" y="17" width="3" height="1"/><rect x="2" y="19" width="3" height="1"/><rect x="2" y="21" width="3" height="1"/></g>
    <!-- new chart -->
    <rect x="11.5" y="6.5" width="13" height="10" fill="#fff" stroke="#3F7FD0"/><rect x="11.5" y="6.5" width="13" height="2.5" fill="#8CB8E8"/><path d="M14 9v5M14 9l-1.5 1.5M14 9l1.5 1.5" stroke="#5A7AA0" stroke-width="0.8" fill="none"/><path d="M16 15h11M21.5 9.5v11" stroke="#22B14C" stroke-width="3.2"/>
    <path d="M32 13h6l-3 3z" fill="#000"/>
    <rect x="47.5" y="6.5" width="14" height="10" fill="#fff" stroke="#3F7FD0"/><rect x="51.5" y="11.5" width="13" height="10" fill="#fff" stroke="#3F7FD0"/><path d="M50 10h9M53 15h9M53 18h9" stroke="#6A8AB0" stroke-width="0.8"/>
    <path d="M69 13h6l-3 3z" fill="#000"/>
    <rect x="83" y="5" width="1" height="18" fill="#A0A0A0"/>
    <!-- market watch -->
    <rect x="92.5" y="6.5" width="15" height="15" rx="1" fill="#F4F8FF" stroke="#4A8AD8" stroke-width="1.2"/><path d="M94.5 13l3-4 3 4h-1.8v3h-2.4v-3z" fill="#22AA33"/><path d="M100 15h1.8v-3h2.4v3h1.8l-3 4z" fill="#E84020"/>
    <!-- crosshair -->
    <circle cx="128.5" cy="13.5" r="5" fill="none" stroke="#666" stroke-width="1.5"/><path d="M128.5 6v15M121 13.5h15" stroke="#555" stroke-width="1.2"/>
    <!-- folder star -->
    <path d="M147 8h5l1 2h7v9h-13z" fill="#F2D36A" stroke="#C9A030" stroke-width="0.8"/><path d="M158 11l1.6 3.3 3.6.4-2.7 2.5.8 3.6-3.3-1.9-3.3 1.9.8-3.6-2.7-2.5 3.6-.4z" fill="#F7D046" stroke="#C89020" stroke-width="0.8"/>
    <!-- terminal -->
    <rect x="176.5" y="7.5" width="15" height="13" rx="1" fill="#fff" stroke="#2F6FC0"/><rect x="176.5" y="7.5" width="3" height="13" fill="#2F6FC0"/><path d="M182 10.5h8M182 13.5h8M182 16.5h8" stroke="#6A8AC0"/>
    <!-- tester -->
    <rect x="204.5" y="7.5" width="12" height="11" fill="#FAFAF0" stroke="#999"/><circle cx="211" cy="14" r="4" fill="#BFD8F0" stroke="#6A9AD0" stroke-width="1.4"/><path d="M214 17l4 4" stroke="#D0A020" stroke-width="2"/>
    <rect x="229" y="5" width="1" height="18" fill="#A0A0A0"/>
    <!-- new order -->
    <path d="M239.5 6.5h8l3 3v10h-11z" fill="#fff" stroke="#777"/><path d="M242 10h5M242 12.5h6M242 15h6" stroke="#888"/><path d="M245 17h9M249.5 12.5v9" stroke="#22B14C" stroke-width="3"/>
    <!-- metaeditor -->
    <path d="M328 15l7-7 7 5-7 6z" fill="#F0B030" stroke="#B07010" stroke-width="0.8"/>
    <!-- cloud -->
    <path d="M356 17a3 3 0 0 1 1-6 4 4 0 0 1 8-1 3 3 0 0 1 4 3 3 3 0 0 1-1 4z" fill="#A8CCF0" stroke="#3F7FD0" stroke-width="0.9"/><rect x="360" y="7" width="7" height="5" fill="#fff" stroke="#3F7FD0" stroke-width="0.8"/>
    <!-- signals -->
    <circle cx="391" cy="14" r="7" fill="#E0ECF8" stroke="#5A9AD0" stroke-width="1.2"/><circle cx="391" cy="14" r="4" fill="none" stroke="#3A8A40" stroke-width="1.2"/><circle cx="391" cy="14" r="1.6" fill="#2A7AD0"/>
    <!-- autotrading -->
    <ellipse cx="418" cy="13" rx="8" ry="6" fill="#5AA8E8"/><path d="M411 11h14" stroke="#F0C030" stroke-width="2.5"/><circle cx="423" cy="18" r="4.2" fill="#E02020" stroke="#fff" stroke-width="1"/><rect x="421" y="17" width="4" height="2" fill="#fff"/>
    <rect x="505" y="5" width="1" height="18" fill="#A0A0A0"/>
    <g fill="#999"><rect x="509" y="5" width="2" height="1"/><rect x="509" y="7" width="2" height="1"/><rect x="509" y="9" width="2" height="1"/><rect x="509" y="11" width="2" height="1"/><rect x="509" y="13" width="2" height="1"/><rect x="509" y="15" width="2" height="1"/><rect x="509" y="17" width="2" height="1"/><rect x="509" y="19" width="2" height="1"/><rect x="509" y="21" width="2" height="1"/></g>
    <!-- chart types -->
    <path d="M520.5 7v14h12M525 10v8M528.5 11v6" stroke="#444" stroke-width="1.2" fill="none"/><path d="M528 12h2" stroke="#2A9A30" stroke-width="1.5"/>
    <rect x="541.5" y="3.5" width="22" height="20" fill="#F8F8F8" stroke="#D8D8D8"/>
    <path d="M546.5 7v14h12" stroke="#444" stroke-width="1.2" fill="none"/><rect x="551" y="9" width="4" height="7" fill="#2CB040" stroke="#1A7A20" stroke-width="0.6"/><path d="M553 7v11" stroke="#1A7A20"/>
    <path d="M575.5 7v14h12" stroke="#444" stroke-width="1.2" fill="none"/><path d="M577 18c3-8 6-9 9-4" stroke="#2A9A30" stroke-width="1.2" fill="none"/>
    <rect x="598" y="5" width="1" height="18" fill="#A0A0A0"/>
    <!-- zoom -->
    <circle cx="613" cy="12" r="5.5" fill="#D8ECFA" stroke="#3A8AD8" stroke-width="1.5"/><path d="M610 12h6M613 9v6" stroke="#2A6AC0" stroke-width="1.6"/><path d="M617 16l4 4" stroke="#D8A020" stroke-width="2.4"/>
    <circle cx="641" cy="12" r="5.5" fill="#D8ECFA" stroke="#3A8AD8" stroke-width="1.5"/><path d="M638 12h6" stroke="#2A6AC0" stroke-width="1.6"/><path d="M645 16l4 4" stroke="#D8A020" stroke-width="2.4"/>
    <rect x="664" y="6" width="7" height="7" fill="#30A030"/><rect x="672" y="6" width="7" height="7" fill="#2A6AD0"/><rect x="664" y="14" width="7" height="7" fill="#2A6AD0"/><rect x="672" y="14" width="7" height="7" fill="#30A030"/>
    <rect x="688" y="5" width="1" height="18" fill="#A0A0A0"/>
    <path d="M699.5 7v14h12" stroke="#444" stroke-width="1.2" fill="none"/><path d="M706 11l4 3-4 3z" fill="#2A9A30"/>
    <rect x="722.5" y="3.5" width="22" height="20" fill="#F8F8F8" stroke="#D8D8D8"/>
    <path d="M727.5 7v14h12" stroke="#444" stroke-width="1.2" fill="none"/><path d="M739 11h-5M734 11l3-2.5M734 11l3 2.5M733.5 7v8" stroke="#D04020" stroke-width="1.2" fill="none"/>
    <rect x="750" y="5" width="1" height="18" fill="#A0A0A0"/>
    <path d="M760.5 6.5h7l3 3v10h-10z" fill="#fff" stroke="#777"/><path d="M765 16h9M769.5 11.5v9" stroke="#22B14C" stroke-width="3"/>
    <path d="M780 12h6l-3 3z" fill="#000"/>
    <circle cx="804" cy="13" r="7" fill="#3A8AD8"/><circle cx="804" cy="13" r="5" fill="#fff"/><path d="M804 9.5v3.5h3" stroke="#333" stroke-width="1" fill="none"/>
    <path d="M816 12h6l-3 3z" fill="#000"/>
    <rect x="833.5" y="6.5" width="15" height="14" fill="#fff" stroke="#3A7AC8"/><rect x="833.5" y="6.5" width="15" height="3" fill="#3A7AC8"/><path d="M835 13l4-2 4 1 4-2" stroke="#D03030" fill="none"/><path d="M835 17l4-2 4 1 4-2" stroke="#30A030" fill="none"/>
    <path d="M853 12h6l-3 3z" fill="#000"/>
    <rect x="865" y="1" width="1" height="25" fill="#D0D0D0"/><rect x="0" y="26" width="866" height="1" fill="#A9A9A9"/>
  </svg>
  <div class="tbt" style="left:258px;top:5px">New Order</div>
  <div class="tbt" style="left:431px;top:5px">AutoTrading</div>
  <svg class="abs" style="left:1860px;top:3px" width="60" height="22"><circle cx="15" cy="8" r="4.5" fill="none" stroke="#2A6AD0" stroke-width="1.6"/><path d="M12 11l-4.5 4.5" stroke="#3A70D0" stroke-width="2.2"/><ellipse cx="49" cy="8" rx="6" ry="4" fill="#EEE" stroke="#AAA"/><ellipse cx="42" cy="11" rx="5" ry="3.5" fill="#F4F4F4" stroke="#AAA"/></svg>
</div>
<div id="tb2" class="abs">
  <svg class="abs" style="left:0;top:0" width="580" height="27" viewBox="0 0 580 27">
    <g fill="#888"><rect x="2" y="5" width="3" height="1"/><rect x="2" y="7" width="3" height="1"/><rect x="2" y="9" width="3" height="1"/><rect x="2" y="11" width="3" height="1"/><rect x="2" y="13" width="3" height="1"/><rect x="2" y="15" width="3" height="1"/><rect x="2" y="17" width="3" height="1"/><rect x="2" y="19" width="3" height="1"/><rect x="2" y="21" width="3" height="1"/></g>
    <rect x="8.5" y="2.5" width="24" height="22" fill="#F6F6F6" stroke="#D8D8D8"/><rect x="8" y="2" width="1" height="23" fill="#888"/>
    <path d="M16 7l8 7h-4l2 5-2 1-2-5-3 3z" fill="#333"/>
    <path d="M40 13.5h15M47.5 6v15" stroke="#444" stroke-width="1"/>
    <rect x="65" y="4" width="1" height="20" fill="#888"/>
    <path d="M82.5 8v11" stroke="#444" stroke-width="1.2"/>
    <path d="M104 13.5h13" stroke="#444" stroke-width="1.2"/>
    <path d="M132 20l13-12" stroke="#444" stroke-width="1.2"/>
    <path d="M159 18l11-10M162 20l11-10M162 12l3 3M166 9l3 3" stroke="#444" stroke-width="1.1"/><text x="170" y="24" font-size="7" font-weight="bold" fill="#333" font-family="Liberation Sans">E</text>
    <path d="M187 7.5h13M187 11.5h13M187 15.5h13M187 19.5h10" stroke="#555" stroke-dasharray="1 1"/><text x="197" y="24" font-size="7" font-weight="bold" fill="#333" font-family="Liberation Sans">F</text>
    <text x="217" y="19" font-size="13" fill="#444" font-family="Liberation Sans">A</text>
    <rect x="244.5" y="7.5" width="12" height="12" fill="none" stroke="#666" stroke-dasharray="1 1"/><text x="246" y="18" font-size="11" font-weight="bold" fill="#444" font-family="Liberation Sans">T</text>
    <path d="M273 10l3-3 3 3zM274 13l3 3 3-3M281 17l3 3 3-3z" fill="#333" stroke="#333"/>
    <path d="M290 13h6l-3 3z" fill="#000"/>
    <rect x="302" y="4" width="1" height="20" fill="#888"/>
    <g fill="#999"><rect x="306" y="5" width="2" height="1"/><rect x="306" y="7" width="2" height="1"/><rect x="306" y="9" width="2" height="1"/><rect x="306" y="11" width="2" height="1"/><rect x="306" y="13" width="2" height="1"/><rect x="306" y="15" width="2" height="1"/><rect x="306" y="17" width="2" height="1"/><rect x="306" y="19" width="2" height="1"/><rect x="306" y="21" width="2" height="1"/></g>
    <rect x="424.5" y="2.5" width="25" height="22" fill="#F6F6F6" stroke="#D8D8D8"/>
    <g font-size="10.5" fill="#444" font-family="Liberation Sans">
      <text x="317" y="18">M1</text><text x="344" y="18">M5</text><text x="370" y="18">M15</text><text x="398" y="18">M30</text><text x="428" y="18">H1</text><text x="456" y="18">H4</text><text x="486" y="18">D1</text><text x="513" y="18">W1</text><text x="539" y="18">MN</text>
    </g>
    <rect x="563" y="4" width="1" height="20" fill="#A0A0A0"/>
  </svg>
</div>
<div class="abs" style="left:0;top:97px;width:1920px;height:1px;background:#A0A0A0"></div>
<div class="abs" style="left:0;top:98px;width:1920px;height:1px;background:#6D6D6D"></div>
<div class="abs" style="left:0;top:98px;width:1px;height:910px;background:#A0A0A0"></div>
<div class="abs" style="left:1px;top:98px;width:1px;height:910px;background:#6D6D6D"></div>
<div class="abs" style="left:1918px;top:98px;width:2px;height:910px;background:#E8E8E8"></div>
<div id="status" class="abs">
  <span style="left:2px">For Help, press F1</span>
  <div class="sep" style="left:1226px"></div><span style="left:1232px">Default</span>
  <div class="sep" style="left:1342px"></div><span style="left:1348px">2022.07.19 07:00</span>
  <div class="sep" style="left:1444px"></div><span style="left:1450px">O: 0.66860</span>
  <div class="sep" style="left:1515px"></div><span style="left:1521px">H: 0.66890</span>
  <div class="sep" style="left:1586px"></div><span style="left:1592px">L: 0.66808</span>
  <div class="sep" style="left:1654px"></div><span style="left:1660px">C: 0.66833</span>
  <div class="sep" style="left:1724px"></div><span style="left:1730px">V: 2529</span>
  <div class="sep" style="left:1790px"></div>
  <svg class="abs" style="left:1796px;top:6px" width="24" height="14"><g fill="#6A8A10"><rect x="0" y="0" width="2" height="13"/><rect x="3" y="0" width="2" height="13"/><rect x="6" y="0" width="2" height="13"/><rect x="9" y="0" width="2" height="13"/><rect x="12" y="0" width="2" height="13"/><rect x="15" y="0" width="2" height="13"/><rect x="18" y="0" width="2" height="13"/></g><g fill="#1A3A5A"><rect x="0" y="8" width="2" height="5"/><rect x="3" y="6" width="2" height="7"/><rect x="6" y="5" width="2" height="8"/><rect x="9" y="4" width="2" height="9"/><rect x="12" y="3" width="2" height="10"/><rect x="15" y="2" width="2" height="11"/><rect x="18" y="1" width="2" height="12"/></g></svg>
  <span style="left:1823px">14/1 kb</span>
</div>
<div id="taskbar" class="abs">
  <svg class="abs" style="left:20px;top:12px" width="24" height="24"><defs><linearGradient id="sun" x1="0" y1="0" x2="1" y2="1"><stop offset="0" stop-color="#FFC800"/><stop offset="1" stop-color="#E86000"/></linearGradient></defs><circle cx="12" cy="12" r="10" fill="url(#sun)"/></svg>
  <div class="abs" style="left:52px;top:10px;font-size:12px;color:#111">79°F</div>
  <div class="abs" style="left:52px;top:26px;font-size:12px;color:#444">Sunny</div>
  <svg class="abs" style="left:800px;top:0" width="340" height="48">
    <defs><linearGradient id="win" x1="0" y1="0" x2="1" y2="1"><stop offset="0" stop-color="#4CC2FF"/><stop offset="1" stop-color="#0A72D0"/></linearGradient></defs>
    <rect x="17" y="13" width="11" height="11" rx="1" fill="url(#win)"/><rect x="29" y="13" width="11" height="11" rx="1" fill="url(#win)"/><rect x="17" y="25" width="11" height="11" rx="1" fill="url(#win)"/><rect x="29" y="25" width="11" height="11" rx="1" fill="url(#win)"/>
    <circle cx="74" cy="22" r="7.5" fill="none" stroke="#222" stroke-width="2.2"/><path d="M68.5 28l-5 5" stroke="#222" stroke-width="2.6"/>
    <rect x="111" y="13" width="12" height="14" fill="#F4F4F4" stroke="#DDD"/><rect x="105" y="23" width="18" height="13" fill="#222"/><rect x="111" y="19" width="12" height="10" fill="#BDBDBD"/>
    <circle cx="160" cy="23" r="11" fill="#6B5FD8"/><path d="M152 32l-2 3 5-2z" fill="#6B5FD8"/><rect x="154" y="18" width="9" height="9" rx="1.5" fill="#fff"/><path d="M163 21l4-2v8l-4-2z" fill="#fff"/>
    <path d="M193 14h8l2 2h13v19h-23z" fill="#E8B030"/><rect x="193" y="18" width="23" height="17" fill="#F8D050"/><rect x="199" y="28" width="11" height="5" rx="1" fill="#1A6AD0"/>
    <ellipse cx="249" cy="23" rx="10" ry="11" fill="#E0101A"/><ellipse cx="249" cy="23" rx="4.5" ry="8" fill="#C8EAEC"/>
    <rect x="246" y="43" width="6" height="3" rx="1.5" fill="#777"/>
    <rect x="274" y="7" width="38" height="38" rx="4" fill="#E4F2F3" stroke="#D4E4E6"/>
    <circle cx="292" cy="23" r="10" fill="#24A861"/><path d="M292 16a6.5 6.5 0 1 0 0 14" stroke="#fff" stroke-width="3" fill="none"/><path d="M293 20h6M293 24h6" stroke="#fff" stroke-width="1.6"/>
    <rect x="285" y="43" width="16" height="3" rx="1.5" fill="#1A7A9A"/>
  </svg>
  <svg class="abs" style="left:1690px;top:8px" width="230" height="34">
    <path d="M6 19l6-6 6 6" stroke="#111" stroke-width="1.5" fill="none"/>
    <circle cx="37" cy="18" r="6" fill="#F2C230"/><circle cx="41" cy="21" r="5" fill="#20A040"/><path d="M38.5 21l2 2 3-4" stroke="#fff" stroke-width="1.3" fill="none"/>
    <path d="M57 16a10 10 0 0 1 14 0M59.5 19a6.5 6.5 0 0 1 9 0M62 22a3 3 0 0 1 4 0" stroke="#111" stroke-width="1.4" fill="none"/><circle cx="64" cy="24.5" r="1.2" fill="#111"/>
    <path d="M82 15h3l4-3.5v14l-4-3.5h-3z" fill="none" stroke="#111" stroke-width="1.2"/><path d="M91 15a4 4 0 0 1 0 6M93.5 13a7 7 0 0 1 0 10" stroke="#111" stroke-width="1.2" fill="none"/>
    <rect x="104.5" y="13.5" width="13" height="9" rx="1.5" fill="none" stroke="#111" stroke-width="1.2"/><path d="M118 16v3" stroke="#111" stroke-width="2"/><path d="M103 11v5M106 11v5" stroke="#111" stroke-width="1.3"/>
    <circle cx="202" cy="17" r="9" fill="#1E7A8C"/><text x="202" y="21.5" text-anchor="middle" font-size="12" fill="#fff" font-family="Liberation Sans">4</text>
  </svg>
  <div class="abs" style="left:1838px;top:9px;font-size:12px;color:#111;text-align:right;width:0">
  </div>
  <div class="abs" style="left:1790px;top:9px;width:86px;font-size:12px;color:#111;text-align:right">6:12 PM</div>
  <div class="abs" style="left:1790px;top:25px;width:86px;font-size:12px;color:#111;text-align:right">8/6/2022</div>
</div>
</body></html>
